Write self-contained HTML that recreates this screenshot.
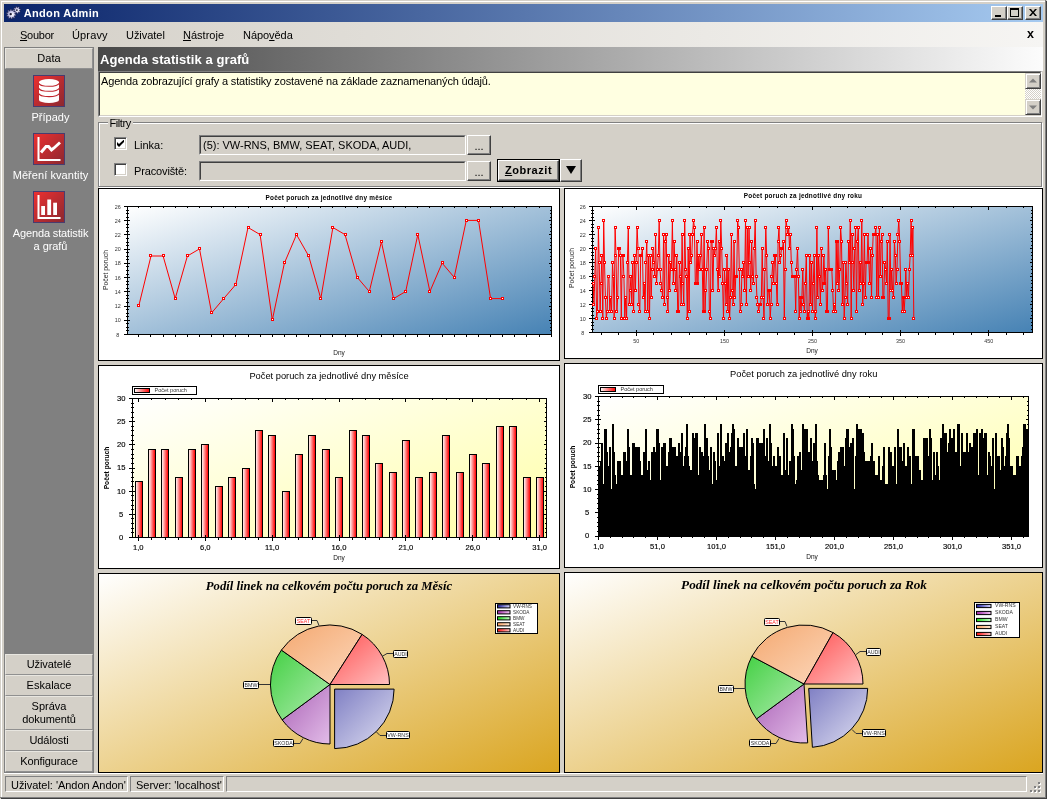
<!DOCTYPE html>
<html><head><meta charset="utf-8"><title>Andon Admin</title>
<style>
html,body{margin:0;padding:0;}
body{will-change:transform;width:1047px;height:799px;overflow:hidden;background:#d4d0c8;font-family:"Liberation Sans",sans-serif;font-size:11px;color:#000;position:relative;}
.abs{position:absolute;}
#frame{position:absolute;left:0;top:0;width:1045px;height:797px;border-right:1px solid #808080;border-bottom:1px solid #808080;box-shadow:1px 1px 0 #404040;}
#frame2{position:absolute;left:1px;top:1px;width:1043px;height:795px;border-left:1px solid #fff;border-top:1px solid #fff;}
#title{position:absolute;left:4px;top:4px;width:1039px;height:18px;background:linear-gradient(90deg,#0a246a 0%,#a6caf0 100%);}
#title span{position:absolute;left:19.7px;top:3px;color:#fff;font-weight:bold;font-size:11px;}
.tb{position:absolute;top:6px;width:16px;height:14px;background:#d4d0c8;box-sizing:border-box;border:1px solid;border-color:#fff #404040 #404040 #fff;box-shadow:inset -1px -1px 0 #808080;}
#menu{position:absolute;left:4px;top:22px;width:1039px;height:25px;background:linear-gradient(90deg,#d4d0c8 0%,#f6f5f3 100%);}
#menu span{position:absolute;top:7px;font-size:11px;}
u{text-decoration:underline;}
#side{position:absolute;left:4px;top:47px;width:90px;height:726px;background:#808080;}
.sb{position:absolute;left:1px;width:88px;background:#d4d0c8;text-align:center;box-sizing:border-box;border:1px solid;border-color:#e8e6e0 #909090 #909090 #e8e6e0;font-size:11px;}
.ico{position:absolute;left:29px;width:32px;height:32px;}
.lbl{position:absolute;left:1.5px;width:90px;text-align:center;color:#fff;font-size:11px;line-height:13px;}
#hdr{position:absolute;left:98px;top:47px;width:945px;height:24px;background:linear-gradient(90deg,#484848 0%,#fcfcfc 100%);}
#hdr span{position:absolute;left:2px;top:5px;color:#fff;font-weight:bold;font-size:13px;}
#desc{position:absolute;left:98px;top:71px;width:944px;height:46px;background:#ffffe1;box-sizing:border-box;border:1px solid;border-color:#808080 #fff #fff #808080;}
#desc .in{position:absolute;left:0;top:0;right:0;bottom:0;border:1px solid;border-color:#404040 #d4d0c8 #d4d0c8 #404040;}
#desc span{position:absolute;left:2px;top:3px;font-size:11px;}
.sbtn{position:absolute;left:1025px;width:16px;height:16px;background:#d4d0c8;box-sizing:border-box;border:1px solid;border-color:#d4d0c8 #404040 #404040 #d4d0c8;box-shadow:inset 1px 1px 0 #fff,inset -1px -1px 0 #808080;}
#grp{position:absolute;left:98px;top:122px;width:944px;height:65px;box-sizing:border-box;border:1px solid #808080;box-shadow:inset 1px 1px 0 #fff,1px 1px 0 #fff;}
.tf{position:absolute;left:199px;width:267px;height:20px;box-sizing:border-box;background:#d4d0c8;border:1px solid;border-color:#808080 #fff #fff #808080;}
.tf i{position:absolute;left:0;top:0;right:0;bottom:0;border:1px solid;border-color:#404040 #d4d0c8 #d4d0c8 #404040;}
.tf span{position:absolute;left:3px;top:3px;font-size:11px;}
.btn{position:absolute;background:#d4d0c8;box-sizing:border-box;border:1px solid;border-color:#fff #404040 #404040 #fff;box-shadow:inset -1px -1px 0 #808080;text-align:center;}
.cb{position:absolute;left:114px;width:13px;height:13px;box-sizing:border-box;background:#fff;border:1px solid;border-color:#808080 #fff #fff #808080;box-shadow:inset 1px 1px 0 #404040,inset -1px -1px 0 #d4d0c8;}
#status{position:absolute;left:4px;top:774px;width:1039px;height:21px;}
.sp{position:absolute;top:2px;height:16px;box-sizing:border-box;border:1px solid;border-color:#808080 #fff #fff #808080;font-size:11px;line-height:17px;padding-left:5px;white-space:nowrap;}
/*LS*/#t_title{letter-spacing:0.345px}#t_m1{letter-spacing:-0.247px}#t_m2{letter-spacing:0.143px}#t_m3{letter-spacing:-0.041px}#t_m4{letter-spacing:0.014px}#t_m5{letter-spacing:-0.057px}#t_data{letter-spacing:0.113px}#t_l1{letter-spacing:0.011px}#t_l2{letter-spacing:0.074px}#t_l3{letter-spacing:-0.135px}#t_l4{letter-spacing:-0.064px}#t_b1{letter-spacing:-0.061px}#t_b2{letter-spacing:0.020px}#t_b3{letter-spacing:-0.010px}#t_b4{letter-spacing:-0.104px}#t_b5{letter-spacing:-0.094px}#t_b6{letter-spacing:-0.111px}#t_hdr{letter-spacing:0.084px}#t_desc{letter-spacing:-0.153px}#t_f{letter-spacing:-0.421px}#t_linka{letter-spacing:-0.027px}#t_prac{letter-spacing:-0.138px}#t_tf{letter-spacing:-0.009px}#t_zob{letter-spacing:0.550px}#t_s1{letter-spacing:-0.035px}#t_s2{letter-spacing:-0.018px}</style></head><body>
<div id="frame"></div><div id="frame2"></div>
<div id="title">
<svg class="abs" style="left:2px;top:1px" width="16" height="16" viewBox="0 0 16 16"><defs><radialGradient id="gg" cx="0.6" cy="0.55" r="0.6"><stop offset="0" stop-color="#ffffff"/><stop offset="0.5" stop-color="#c8c8ec"/><stop offset="1" stop-color="#8080b0"/></radialGradient></defs><path d="M13.48 5.87L14.32 6.73L13.85 7.46L12.72 7.05L12.21 7.40L12.19 8.60L11.34 8.78L10.83 7.69L10.23 7.58L9.37 8.42L8.64 7.95L9.05 6.82L8.70 6.31L7.50 6.29L7.32 5.44L8.41 4.93L8.52 4.33L7.68 3.47L8.15 2.74L9.28 3.15L9.79 2.80L9.81 1.60L10.66 1.42L11.17 2.51L11.77 2.62L12.63 1.78L13.36 2.25L12.95 3.38L13.30 3.89L14.50 3.91L14.68 4.76L13.59 5.27Z" fill="url(#gg)" stroke="#202040" stroke-width="0.5"/><path d="M8.80 9.10L10.16 9.73L9.96 10.65L8.46 10.63L8.11 11.22L8.84 12.52L8.14 13.15L6.93 12.25L6.31 12.52L6.14 14.01L5.20 14.10L4.75 12.67L4.09 12.52L3.07 13.62L2.26 13.15L2.74 11.72L2.29 11.22L0.82 11.51L0.44 10.65L1.66 9.77L1.60 9.10L0.24 8.47L0.44 7.55L1.94 7.57L2.29 6.98L1.56 5.68L2.26 5.05L3.47 5.95L4.09 5.68L4.26 4.19L5.20 4.10L5.65 5.53L6.31 5.68L7.33 4.58L8.14 5.05L7.66 6.48L8.11 6.98L9.58 6.69L9.96 7.55L8.74 8.43Z" fill="url(#gg)" stroke="#202040" stroke-width="0.5"/><circle cx="4.7" cy="9.1" r="1.2" fill="#181830"/><circle cx="10.9" cy="5.1" r="0.9" fill="#181830"/></svg>
<span id="t_title">Andon Admin</span></div>
<div class="tb" style="left:991px"><div class="abs" style="left:3px;top:8px;width:6px;height:2px;background:#000"></div></div>
<div class="tb" style="left:1007px"><div class="abs" style="left:2px;top:1px;width:9px;height:9px;box-sizing:border-box;border:1px solid #000;border-top-width:2px"></div></div>
<div class="tb" style="left:1025px"><svg class="abs" style="left:3px;top:2px" width="8" height="7" viewBox="0 0 8 7"><path d="M0 0h2l2 2.500 2-2.500h2l-3 3.500 3 3.500h-2l-2-2.500-2 2.500h-2l3-3.500z" fill="#000"/></svg></div>
<div id="menu">
<span id="t_m1" style="left:16px"><u>S</u>oubor</span><span id="t_m2" style="left:68px">Úpravy</span><span id="t_m3" style="left:122px">Uživatel</span><span id="t_m4" style="left:179px"><u>N</u>ástroje</span><span id="t_m5" style="left:239px">Nápo<u>v</u>ěda</span>
<span style="left:1023px;font-weight:bold;font-size:12.5px;top:5px">x</span>
</div>
<div id="side">
<div class="sb" style="top:1px;height:21px;line-height:18px"><span id="t_data">Data</span></div>
<svg class="ico" style="top:28px" viewBox="0 0 32 32"><defs><linearGradient id="ig" x1="0" y1="0" x2="1" y2="1"><stop offset="0" stop-color="#ee3030"/><stop offset="1" stop-color="#8a2830"/></linearGradient></defs><rect x=".5" y=".5" width="31" height="31" fill="url(#ig)" stroke="#483c70"/>
<g><path d="M6 7v18a10 3 0 0 0 20 0v-18z" fill="#fff"/><ellipse cx="16" cy="7" rx="10" ry="3" fill="#fff"/><g fill="none" stroke="#c0242c" stroke-width="1.1"><path d="M6 8.300a10 3 0 0 0 20 0"/><path d="M6 13.300a10 3 0 0 0 20 0"/><path d="M6 18.600a10 3 0 0 0 20 0"/></g></g></svg>
<div class="lbl" style="top:64px"><span id="t_l1">Případy</span></div>
<svg class="ico" style="top:86px" viewBox="0 0 32 32"><rect x=".5" y=".5" width="31" height="31" fill="url(#ig)" stroke="#483c70"/><path d="M5.500 4v23h22" fill="none" stroke="#fff" stroke-width="2"/><path d="M8 19.500L13 13.500L15.500 13.500L18.500 17L21 15L27 9.500" fill="none" stroke="#fff" stroke-width="2.900"/></svg>
<div class="lbl" style="top:122px"><span id="t_l2">Měření kvantity</span></div>
<svg class="ico" style="top:144px" viewBox="0 0 32 32"><rect x=".5" y=".5" width="31" height="31" fill="url(#ig)" stroke="#483c70"/><path d="M5.500 4v23h22" fill="none" stroke="#fff" stroke-width="2"/><rect x="8.200" y="15" width="3.800" height="9" fill="#fff"/><rect x="14.300" y="8.500" width="3.800" height="15.500" fill="#fff"/><rect x="20.200" y="11.700" width="3.800" height="12.300" fill="#fff"/></svg>
<div class="lbl" style="top:180px"><span id="t_l3">Agenda statistik</span><br><span id="t_l4">a grafů</span></div>
<div class="sb" style="top:607px;height:21px;line-height:18px"><span id="t_b1">Uživatelé</span></div>
<div class="sb" style="top:628px;height:21px;line-height:18px"><span id="t_b2">Eskalace</span></div>
<div class="sb" style="top:649px;height:34px;line-height:13px;padding-top:3px"><span id="t_b3">Správa</span><br><span id="t_b4">dokumentů</span></div>
<div class="sb" style="top:683px;height:21px;line-height:18px"><span id="t_b5">Události</span></div>
<div class="sb" style="top:704px;height:21px;line-height:18px"><span id="t_b6">Konfigurace</span></div>
</div>
<div id="hdr"><span id="t_hdr">Agenda statistik a grafů</span></div>
<div id="desc"><div class="in"></div><span id="t_desc">Agenda zobrazující grafy a statistiky zostavené na základe zaznamenaných údajů.</span></div>
<div class="abs" style="left:1025px;top:73px;width:16px;height:42px;background:repeating-conic-gradient(#fff 0 25%,#d4d0c8 0 50%) 0 0/2px 2px"></div>
<div class="sbtn" style="top:73px"><svg class="abs" style="left:3px;top:4px" width="8" height="5"><path d="M0 4.500L4 .5l4 4z" fill="#808080"/></svg></div>
<div class="sbtn" style="top:99px"><svg class="abs" style="left:3px;top:5px" width="8" height="5"><path d="M0 .5h8L4 4.500z" fill="#808080"/></svg></div>
<div id="grp"></div>
<div class="abs" style="left:107.5px;top:117px;background:#d4d0c8;padding:0 2px;font-size:11px"><span id="t_f">Filtry</span></div>
<div class="cb" style="top:137px"><svg class="abs" style="left:2px;top:2px" width="7" height="7"><path d="M0 2v3l2 2 5-5v-2.500l-5 4.500z" fill="#000"/></svg></div>
<div class="cb" style="top:163px"></div>
<div class="abs" style="left:134px;top:139px;font-size:11px"><span id="t_linka">Linka:</span></div>
<div class="abs" style="left:134px;top:165px;font-size:11px"><span id="t_prac">Pracoviště:</span></div>
<div class="tf" style="top:135px"><i></i><span id="t_tf">(5): VW-RNS, BMW, SEAT, SKODA, AUDI,</span></div>
<div class="tf" style="top:161px"><i></i></div>
<div class="btn" style="left:467px;top:135px;width:24px;height:20px;line-height:20px">...</div>
<div class="btn" style="left:467px;top:161px;width:24px;height:20px;line-height:20px">...</div>
<div class="abs" style="left:497px;top:159px;width:63px;height:23px;box-sizing:border-box;border:1px solid #000"><div class="btn" style="left:0;top:0;width:61px;height:21px;line-height:18px;font-weight:bold;font-size:11px"><span id="t_zob"><u>Z</u>obrazit</span></div></div>
<div class="btn" style="left:560px;top:159px;width:22px;height:23px"><svg class="abs" style="left:5px;top:6px" width="10" height="8"><path d="M0 0h10L5 8z" fill="#000"/></svg></div>
<svg style="position:absolute;left:98px;top:188px" width="462" height="173" viewBox="98 188 462 173">
<defs><linearGradient id="gl1" x1="0" y1="0" x2="1" y2="1"><stop offset="0" stop-color="#ffffff"/><stop offset="1" stop-color="#4682b4"/></linearGradient></defs>
<rect x="98.5" y="188.5" width="461" height="172" fill="#fff" stroke="#000" shape-rendering="crispEdges"/>
<rect x="127.5" y="206.5" width="424.0" height="128.0" fill="url(#gl1)" stroke="#000" stroke-width="1" shape-rendering="crispEdges"/>
<text x="117.7" y="336.5" font-size="5.4" text-anchor="middle" style="font-family:'Liberation Sans',sans-serif" fill="#333">8</text>
<text x="117.7" y="322.3" font-size="5.4" text-anchor="middle" style="font-family:'Liberation Sans',sans-serif" fill="#333">10</text>
<text x="117.7" y="308.1" font-size="5.4" text-anchor="middle" style="font-family:'Liberation Sans',sans-serif" fill="#333">12</text>
<text x="117.7" y="293.8" font-size="5.4" text-anchor="middle" style="font-family:'Liberation Sans',sans-serif" fill="#333">14</text>
<text x="117.7" y="279.6" font-size="5.4" text-anchor="middle" style="font-family:'Liberation Sans',sans-serif" fill="#333">16</text>
<text x="117.7" y="265.4" font-size="5.4" text-anchor="middle" style="font-family:'Liberation Sans',sans-serif" fill="#333">18</text>
<text x="117.7" y="251.2" font-size="5.4" text-anchor="middle" style="font-family:'Liberation Sans',sans-serif" fill="#333">20</text>
<text x="117.7" y="236.9" font-size="5.4" text-anchor="middle" style="font-family:'Liberation Sans',sans-serif" fill="#333">22</text>
<text x="117.7" y="222.7" font-size="5.4" text-anchor="middle" style="font-family:'Liberation Sans',sans-serif" fill="#333">24</text>
<text x="117.7" y="208.5" font-size="5.4" text-anchor="middle" style="font-family:'Liberation Sans',sans-serif" fill="#333">26</text>
<path d="M124.0 334.5H130.0M549.0 334.5H551.5 M124.0 320.5H130.0M549.0 320.5H551.5 M124.0 306.5H130.0M549.0 306.5H551.5 M124.0 291.5H130.0M549.0 291.5H551.5 M124.0 277.5H130.0M549.0 277.5H551.5 M124.0 263.5H130.0M549.0 263.5H551.5 M124.0 249.5H130.0M549.0 249.5H551.5 M124.0 234.5H130.0M549.0 234.5H551.5 M124.0 220.5H130.0M549.0 220.5H551.5 M124.0 206.5H130.0M549.0 206.5H551.5 M126.0 334.5H129.0M550.0 334.5H551.5 M126.0 330.5H129.0M550.0 330.5H551.5 M126.0 327.5H129.0M550.0 327.5H551.5 M126.0 323.5H129.0M550.0 323.5H551.5 M126.0 320.5H129.0M550.0 320.5H551.5 M126.0 316.5H129.0M550.0 316.5H551.5 M126.0 313.5H129.0M550.0 313.5H551.5 M126.0 309.5H129.0M550.0 309.5H551.5 M126.0 306.5H129.0M550.0 306.5H551.5 M126.0 302.5H129.0M550.0 302.5H551.5 M126.0 298.5H129.0M550.0 298.5H551.5 M126.0 295.5H129.0M550.0 295.5H551.5 M126.0 291.5H129.0M550.0 291.5H551.5 M126.0 288.5H129.0M550.0 288.5H551.5 M126.0 284.5H129.0M550.0 284.5H551.5 M126.0 281.5H129.0M550.0 281.5H551.5 M126.0 277.5H129.0M550.0 277.5H551.5 M126.0 274.5H129.0M550.0 274.5H551.5 M126.0 270.5H129.0M550.0 270.5H551.5 M126.0 266.5H129.0M550.0 266.5H551.5 M126.0 263.5H129.0M550.0 263.5H551.5 M126.0 259.5H129.0M550.0 259.5H551.5 M126.0 256.5H129.0M550.0 256.5H551.5 M126.0 252.5H129.0M550.0 252.5H551.5 M126.0 249.5H129.0M550.0 249.5H551.5 M126.0 245.5H129.0M550.0 245.5H551.5 M126.0 242.5H129.0M550.0 242.5H551.5 M126.0 238.5H129.0M550.0 238.5H551.5 M126.0 234.5H129.0M550.0 234.5H551.5 M126.0 231.5H129.0M550.0 231.5H551.5 M126.0 227.5H129.0M550.0 227.5H551.5 M126.0 224.5H129.0M550.0 224.5H551.5 M126.0 220.5H129.0M550.0 220.5H551.5 M126.0 217.5H129.0M550.0 217.5H551.5 M126.0 213.5H129.0M550.0 213.5H551.5 M126.0 210.5H129.0M550.0 210.5H551.5 M126.0 206.5H129.0M550.0 206.5H551.5 M138.5 333.5V336.5M138.5 206.5V208.0 M150.5 333.5V336.5M150.5 206.5V208.0 M163.5 333.5V336.5M163.5 206.5V208.0 M175.5 333.5V336.5M175.5 206.5V208.0 M187.5 333.5V336.5M187.5 206.5V208.0 M199.5 333.5V336.5M199.5 206.5V208.0 M211.5 333.5V336.5M211.5 206.5V208.0 M223.5 333.5V336.5M223.5 206.5V208.0 M235.5 333.5V336.5M235.5 206.5V208.0 M248.5 333.5V336.5M248.5 206.5V208.0 M260.5 333.5V336.5M260.5 206.5V208.0 M272.5 333.5V336.5M272.5 206.5V208.0 M284.5 333.5V336.5M284.5 206.5V208.0 M296.5 333.5V336.5M296.5 206.5V208.0 M308.5 333.5V336.5M308.5 206.5V208.0 M320.5 333.5V336.5M320.5 206.5V208.0 M332.5 333.5V336.5M332.5 206.5V208.0 M345.5 333.5V336.5M345.5 206.5V208.0 M357.5 333.5V336.5M357.5 206.5V208.0 M369.5 333.5V336.5M369.5 206.5V208.0 M381.5 333.5V336.5M381.5 206.5V208.0 M393.5 333.5V336.5M393.5 206.5V208.0 M405.5 333.5V336.5M405.5 206.5V208.0 M417.5 333.5V336.5M417.5 206.5V208.0 M429.5 333.5V336.5M429.5 206.5V208.0 M442.5 333.5V336.5M442.5 206.5V208.0 M454.5 333.5V336.5M454.5 206.5V208.0 M466.5 333.5V336.5M466.5 206.5V208.0 M478.5 333.5V336.5M478.5 206.5V208.0 M490.5 333.5V336.5M490.5 206.5V208.0 M502.5 333.5V336.5M502.5 206.5V208.0 M514.5 333.5V336.5M514.5 206.5V208.0 M526.5 333.5V336.5M526.5 206.5V208.0 M539.5 333.5V336.5M539.5 206.5V208.0 M551.5 333.5V336.5M551.5 206.5V208.0" stroke="#000" stroke-width="1" fill="none" shape-rendering="crispEdges"/>
<polyline fill="none" stroke="#ff0000" stroke-width="1" points="138.8,305.8 151.0,256.0 163.1,256.0 175.2,298.6 187.4,256.0 199.5,248.9 211.6,312.9 223.7,298.6 235.9,284.4 248.0,227.5 260.1,234.6 272.3,320.0 284.4,263.1 296.5,234.6 308.7,256.0 320.8,298.6 332.9,227.5 345.0,234.6 357.2,277.3 369.3,291.5 381.4,241.8 393.6,298.6 405.7,291.5 417.8,234.6 429.9,291.5 442.1,263.1 454.2,277.3 466.3,220.4 478.5,220.4 490.6,298.6 502.7,298.6"/>
<path d="M137.5 304.5h2v2h-2z M149.5 254.5h2v2h-2z M162.5 254.5h2v2h-2z M174.5 297.5h2v2h-2z M186.5 254.5h2v2h-2z M198.5 247.5h2v2h-2z M210.5 311.5h2v2h-2z M222.5 297.5h2v2h-2z M234.5 283.5h2v2h-2z M247.5 226.5h2v2h-2z M259.5 233.5h2v2h-2z M271.5 318.5h2v2h-2z M283.5 261.5h2v2h-2z M295.5 233.5h2v2h-2z M307.5 254.5h2v2h-2z M319.5 297.5h2v2h-2z M331.5 226.5h2v2h-2z M344.5 233.5h2v2h-2z M356.5 276.5h2v2h-2z M368.5 290.5h2v2h-2z M380.5 240.5h2v2h-2z M392.5 297.5h2v2h-2z M404.5 290.5h2v2h-2z M416.5 233.5h2v2h-2z M428.5 290.5h2v2h-2z M441.5 261.5h2v2h-2z M453.5 276.5h2v2h-2z M465.5 219.5h2v2h-2z M477.5 219.5h2v2h-2z M489.5 297.5h2v2h-2z M501.5 297.5h2v2h-2z" fill="#fff" stroke="#ff0000" stroke-width="1" shape-rendering="crispEdges"/>
<text x="329" y="200" font-size="6.4" font-weight="bold" text-anchor="middle" style="font-family:'Liberation Sans',sans-serif" fill="#000" letter-spacing="0.25">Počet poruch za jednotlivé dny měsíce</text>
<text x="339" y="355" font-size="6.5" text-anchor="middle" style="font-family:'Liberation Sans',sans-serif" fill="#222">Dny</text>
<text transform="translate(108,270) rotate(-90)" font-size="6.8" text-anchor="middle" style="font-family:'Liberation Sans',sans-serif" fill="#222">Počet poruch</text>
</svg>
<svg style="position:absolute;left:564px;top:188px" width="479" height="171" viewBox="564 188 479 171">
<defs><linearGradient id="gl2" x1="0" y1="0" x2="1" y2="1"><stop offset="0" stop-color="#ffffff"/><stop offset="1" stop-color="#4682b4"/></linearGradient></defs>
<rect x="564.5" y="188.5" width="478" height="170" fill="#fff" stroke="#000" shape-rendering="crispEdges"/>
<rect x="592.5" y="206.5" width="440.0" height="126.0" fill="url(#gl2)" stroke="#000" stroke-width="1" shape-rendering="crispEdges"/>
<text x="582.7" y="334.5" font-size="5.4" text-anchor="middle" style="font-family:'Liberation Sans',sans-serif" fill="#333">8</text>
<text x="582.7" y="320.5" font-size="5.4" text-anchor="middle" style="font-family:'Liberation Sans',sans-serif" fill="#333">10</text>
<text x="582.7" y="306.5" font-size="5.4" text-anchor="middle" style="font-family:'Liberation Sans',sans-serif" fill="#333">12</text>
<text x="582.7" y="292.5" font-size="5.4" text-anchor="middle" style="font-family:'Liberation Sans',sans-serif" fill="#333">14</text>
<text x="582.7" y="278.5" font-size="5.4" text-anchor="middle" style="font-family:'Liberation Sans',sans-serif" fill="#333">16</text>
<text x="582.7" y="264.5" font-size="5.4" text-anchor="middle" style="font-family:'Liberation Sans',sans-serif" fill="#333">18</text>
<text x="582.7" y="250.5" font-size="5.4" text-anchor="middle" style="font-family:'Liberation Sans',sans-serif" fill="#333">20</text>
<text x="582.7" y="236.5" font-size="5.4" text-anchor="middle" style="font-family:'Liberation Sans',sans-serif" fill="#333">22</text>
<text x="582.7" y="222.5" font-size="5.4" text-anchor="middle" style="font-family:'Liberation Sans',sans-serif" fill="#333">24</text>
<text x="582.7" y="208.5" font-size="5.4" text-anchor="middle" style="font-family:'Liberation Sans',sans-serif" fill="#333">26</text>
<path d="M589.0 332.5H595.0M1030.0 332.5H1032.5 M589.0 318.5H595.0M1030.0 318.5H1032.5 M589.0 304.5H595.0M1030.0 304.5H1032.5 M589.0 290.5H595.0M1030.0 290.5H1032.5 M589.0 276.5H595.0M1030.0 276.5H1032.5 M589.0 262.5H595.0M1030.0 262.5H1032.5 M589.0 248.5H595.0M1030.0 248.5H1032.5 M589.0 234.5H595.0M1030.0 234.5H1032.5 M589.0 220.5H595.0M1030.0 220.5H1032.5 M589.0 206.5H595.0M1030.0 206.5H1032.5 M591.0 332.5H594.0M1031.0 332.5H1032.5 M591.0 329.5H594.0M1031.0 329.5H1032.5 M591.0 325.5H594.0M1031.0 325.5H1032.5 M591.0 322.5H594.0M1031.0 322.5H1032.5 M591.0 318.5H594.0M1031.0 318.5H1032.5 M591.0 315.5H594.0M1031.0 315.5H1032.5 M591.0 311.5H594.0M1031.0 311.5H1032.5 M591.0 308.5H594.0M1031.0 308.5H1032.5 M591.0 304.5H594.0M1031.0 304.5H1032.5 M591.0 301.5H594.0M1031.0 301.5H1032.5 M591.0 297.5H594.0M1031.0 297.5H1032.5 M591.0 294.5H594.0M1031.0 294.5H1032.5 M591.0 290.5H594.0M1031.0 290.5H1032.5 M591.0 287.5H594.0M1031.0 287.5H1032.5 M591.0 283.5H594.0M1031.0 283.5H1032.5 M591.0 280.5H594.0M1031.0 280.5H1032.5 M591.0 276.5H594.0M1031.0 276.5H1032.5 M591.0 273.5H594.0M1031.0 273.5H1032.5 M591.0 269.5H594.0M1031.0 269.5H1032.5 M591.0 266.5H594.0M1031.0 266.5H1032.5 M591.0 262.5H594.0M1031.0 262.5H1032.5 M591.0 259.5H594.0M1031.0 259.5H1032.5 M591.0 255.5H594.0M1031.0 255.5H1032.5 M591.0 252.5H594.0M1031.0 252.5H1032.5 M591.0 248.5H594.0M1031.0 248.5H1032.5 M591.0 245.5H594.0M1031.0 245.5H1032.5 M591.0 241.5H594.0M1031.0 241.5H1032.5 M591.0 238.5H594.0M1031.0 238.5H1032.5 M591.0 234.5H594.0M1031.0 234.5H1032.5 M591.0 231.5H594.0M1031.0 231.5H1032.5 M591.0 227.5H594.0M1031.0 227.5H1032.5 M591.0 224.5H594.0M1031.0 224.5H1032.5 M591.0 220.5H594.0M1031.0 220.5H1032.5 M591.0 217.5H594.0M1031.0 217.5H1032.5 M591.0 213.5H594.0M1031.0 213.5H1032.5 M591.0 210.5H594.0M1031.0 210.5H1032.5 M591.0 206.5H594.0M1031.0 206.5H1032.5 M601.5 331.5V334.5M601.5 206.5V208.0 M618.5 331.5V334.5M618.5 206.5V208.0 M636.5 330.0V336.0M636.5 206.5V209.5 M653.5 331.5V334.5M653.5 206.5V208.0 M671.5 331.5V334.5M671.5 206.5V208.0 M689.5 331.5V334.5M689.5 206.5V208.0 M706.5 331.5V334.5M706.5 206.5V208.0 M724.5 330.0V336.0M724.5 206.5V209.5 M741.5 331.5V334.5M741.5 206.5V208.0 M759.5 331.5V334.5M759.5 206.5V208.0 M777.5 331.5V334.5M777.5 206.5V208.0 M794.5 331.5V334.5M794.5 206.5V208.0 M812.5 330.0V336.0M812.5 206.5V209.5 M830.5 331.5V334.5M830.5 206.5V208.0 M847.5 331.5V334.5M847.5 206.5V208.0 M865.5 331.5V334.5M865.5 206.5V208.0 M882.5 331.5V334.5M882.5 206.5V208.0 M900.5 330.0V336.0M900.5 206.5V209.5 M918.5 331.5V334.5M918.5 206.5V208.0 M935.5 331.5V334.5M935.5 206.5V208.0 M953.5 331.5V334.5M953.5 206.5V208.0 M971.5 331.5V334.5M971.5 206.5V208.0 M988.5 330.0V336.0M988.5 206.5V209.5 M1006.5 331.5V334.5M1006.5 206.5V208.0 M1023.5 331.5V334.5M1023.5 206.5V208.0" stroke="#000" stroke-width="1" fill="none" shape-rendering="crispEdges"/>
<text x="636.2" y="342.8" font-size="5.4" text-anchor="middle" style="font-family:'Liberation Sans',sans-serif" fill="#333">50</text>
<text x="724.4" y="342.8" font-size="5.4" text-anchor="middle" style="font-family:'Liberation Sans',sans-serif" fill="#333">150</text>
<text x="812.5" y="342.8" font-size="5.4" text-anchor="middle" style="font-family:'Liberation Sans',sans-serif" fill="#333">250</text>
<text x="900.6" y="342.8" font-size="5.4" text-anchor="middle" style="font-family:'Liberation Sans',sans-serif" fill="#333">350</text>
<text x="988.7" y="342.8" font-size="5.4" text-anchor="middle" style="font-family:'Liberation Sans',sans-serif" fill="#333">450</text>
<polyline fill="none" stroke="#ff0000" stroke-width="1" points="593.1,283.2 594.0,304.2 594.8,276.2 595.7,248.2 596.6,318.2 597.5,311.2 598.4,227.2 599.2,262.2 600.1,311.2 601.0,283.2 601.9,255.2 602.8,318.2 603.7,220.2 604.5,262.2 605.4,297.2 606.3,318.2 607.2,311.2 608.1,276.2 608.9,276.2 609.8,311.2 610.7,297.2 611.6,311.2 612.5,262.2 613.3,276.2 614.2,318.2 615.1,227.2 616.0,255.2 616.9,311.2 617.7,297.2 618.6,248.2 619.5,248.2 620.4,255.2 621.3,318.2 622.2,255.2 623.0,255.2 623.9,276.2 624.8,318.2 625.7,297.2 626.6,318.2 627.4,262.2 628.3,227.2 629.2,304.2 630.1,290.2 631.0,276.2 631.8,304.2 632.7,262.2 633.6,311.2 634.5,255.2 635.4,290.2 636.2,262.2 637.1,227.2 638.0,248.2 638.9,304.2 639.8,311.2 640.7,255.2 641.5,255.2 642.4,248.2 643.3,297.2 644.2,283.2 645.1,311.2 645.9,262.2 646.8,241.2 647.7,311.2 648.6,255.2 649.5,318.2 650.3,255.2 651.2,297.2 652.1,269.2 653.0,248.2 653.9,262.2 654.8,276.2 655.6,234.2 656.5,283.2 657.4,269.2 658.3,255.2 659.2,220.2 660.0,269.2 660.9,283.2 661.8,290.2 662.7,297.2 663.6,234.2 664.4,304.2 665.3,241.2 666.2,234.2 667.1,297.2 668.0,311.2 668.8,255.2 669.7,290.2 670.6,262.2 671.5,269.2 672.4,220.2 673.3,283.2 674.1,241.2 675.0,269.2 675.9,290.2 676.8,255.2 677.7,311.2 678.5,311.2 679.4,262.2 680.3,276.2 681.2,304.2 682.1,234.2 682.9,283.2 683.8,304.2 684.7,220.2 685.6,269.2 686.5,276.2 687.3,318.2 688.2,248.2 689.1,311.2 690.0,234.2 690.9,262.2 691.8,255.2 692.6,234.2 693.5,220.2 694.4,227.2 695.3,283.2 696.2,283.2 697.0,241.2 697.9,283.2 698.8,255.2 699.7,269.2 700.6,255.2 701.4,234.2 702.3,269.2 703.2,311.2 704.1,227.2 705.0,311.2 705.8,290.2 706.7,269.2 707.6,241.2 708.5,248.2 709.4,311.2 710.3,318.2 711.1,241.2 712.0,241.2 712.9,290.2 713.8,248.2 714.7,255.2 715.5,248.2 716.4,227.2 717.3,269.2 718.2,290.2 719.1,241.2 719.9,276.2 720.8,220.2 721.7,248.2 722.6,283.2 723.5,318.2 724.4,269.2 725.2,283.2 726.1,304.2 727.0,255.2 727.9,311.2 728.8,269.2 729.6,318.2 730.5,297.2 731.4,234.2 732.3,290.2 733.2,304.2 734.0,241.2 734.9,297.2 735.8,276.2 736.7,276.2 737.6,220.2 738.4,227.2 739.3,269.2 740.2,311.2 741.1,304.2 742.0,269.2 742.9,276.2 743.7,262.2 744.6,290.2 745.5,220.2 746.4,304.2 747.3,227.2 748.1,276.2 749.0,227.2 749.9,262.2 750.8,290.2 751.7,241.2 752.5,276.2 753.4,283.2 754.3,248.2 755.2,220.2 756.1,276.2 756.9,297.2 757.8,304.2 758.7,311.2 759.6,304.2 760.5,304.2 761.4,297.2 762.2,248.2 763.1,297.2 764.0,318.2 764.9,269.2 765.8,227.2 766.6,255.2 767.5,304.2 768.4,290.2 769.3,290.2 770.2,318.2 771.0,304.2 771.9,276.2 772.8,262.2 773.7,283.2 774.6,255.2 775.4,255.2 776.3,283.2 777.2,304.2 778.1,241.2 779.0,227.2 779.9,262.2 780.7,255.2 781.6,248.2 782.5,248.2 783.4,241.2 784.3,318.2 785.1,269.2 786.0,220.2 786.9,227.2 787.8,234.2 788.7,227.2 789.5,248.2 790.4,234.2 791.3,262.2 792.2,276.2 793.1,276.2 793.9,276.2 794.8,276.2 795.7,311.2 796.6,269.2 797.5,248.2 798.4,276.2 799.2,318.2 800.1,297.2 801.0,311.2 801.9,297.2 802.8,269.2 803.6,304.2 804.5,311.2 805.4,283.2 806.3,255.2 807.2,318.2 808.0,311.2 808.9,318.2 809.8,255.2 810.7,304.2 811.6,262.2 812.5,311.2 813.3,283.2 814.2,255.2 815.1,318.2 816.0,311.2 816.9,227.2 817.7,297.2 818.6,255.2 819.5,276.2 820.4,304.2 821.3,248.2 822.1,290.2 823.0,283.2 823.9,255.2 824.8,283.2 825.7,269.2 826.5,311.2 827.4,311.2 828.3,227.2 829.2,269.2 830.1,269.2 831.0,269.2 831.8,269.2 832.7,290.2 833.6,311.2 834.5,304.2 835.4,311.2 836.2,241.2 837.1,283.2 838.0,241.2 838.9,290.2 839.8,269.2 840.6,227.2 841.5,241.2 842.4,304.2 843.3,262.2 844.2,318.2 845.0,297.2 845.9,262.2 846.8,283.2 847.7,304.2 848.6,241.2 849.5,262.2 850.3,220.2 851.2,318.2 852.1,234.2 853.0,262.2 853.9,290.2 854.7,248.2 855.6,227.2 856.5,311.2 857.4,241.2 858.3,227.2 859.1,290.2 860.0,262.2 860.9,283.2 861.8,220.2 862.7,304.2 863.5,283.2 864.4,234.2 865.3,297.2 866.2,262.2 867.1,262.2 868.0,234.2 868.8,262.2 869.7,283.2 870.6,248.2 871.5,297.2 872.4,255.2 873.2,234.2 874.1,234.2 875.0,234.2 875.9,227.2 876.8,297.2 877.6,234.2 878.5,297.2 879.4,227.2 880.3,276.2 881.2,241.2 882.0,234.2 882.9,297.2 883.8,297.2 884.7,262.2 885.6,269.2 886.5,283.2 887.3,241.2 888.2,318.2 889.1,318.2 890.0,234.2 890.9,290.2 891.7,269.2 892.6,290.2 893.5,297.2 894.4,241.2 895.3,255.2 896.1,283.2 897.0,269.2 897.9,234.2 898.8,220.2 899.7,241.2 900.6,283.2 901.4,283.2 902.3,311.2 903.2,297.2 904.1,311.2 905.0,297.2 905.8,269.2 906.7,297.2 907.6,283.2 908.5,297.2 909.4,269.2 910.2,255.2 911.1,220.2 912.0,255.2 912.9,227.2 913.8,318.2"/>
<path d="M592.5 282.5h2v2h-2z M592.5 303.5h2v2h-2z M593.5 275.5h2v2h-2z M594.5 247.5h2v2h-2z M595.5 317.5h2v2h-2z M596.5 310.5h2v2h-2z M597.5 226.5h2v2h-2z M598.5 261.5h2v2h-2z M599.5 310.5h2v2h-2z M600.5 282.5h2v2h-2z M600.5 254.5h2v2h-2z M601.5 317.5h2v2h-2z M602.5 219.5h2v2h-2z M603.5 261.5h2v2h-2z M604.5 296.5h2v2h-2z M605.5 317.5h2v2h-2z M606.5 310.5h2v2h-2z M607.5 275.5h2v2h-2z M607.5 275.5h2v2h-2z M608.5 310.5h2v2h-2z M609.5 296.5h2v2h-2z M610.5 310.5h2v2h-2z M611.5 261.5h2v2h-2z M612.5 275.5h2v2h-2z M613.5 317.5h2v2h-2z M614.5 226.5h2v2h-2z M614.5 254.5h2v2h-2z M615.5 310.5h2v2h-2z M616.5 296.5h2v2h-2z M617.5 247.5h2v2h-2z M618.5 247.5h2v2h-2z M619.5 254.5h2v2h-2z M620.5 317.5h2v2h-2z M621.5 254.5h2v2h-2z M622.5 254.5h2v2h-2z M622.5 275.5h2v2h-2z M623.5 317.5h2v2h-2z M624.5 296.5h2v2h-2z M625.5 317.5h2v2h-2z M626.5 261.5h2v2h-2z M627.5 226.5h2v2h-2z M628.5 303.5h2v2h-2z M629.5 289.5h2v2h-2z M629.5 275.5h2v2h-2z M630.5 303.5h2v2h-2z M631.5 261.5h2v2h-2z M632.5 310.5h2v2h-2z M633.5 254.5h2v2h-2z M634.5 289.5h2v2h-2z M635.5 261.5h2v2h-2z M636.5 226.5h2v2h-2z M637.5 247.5h2v2h-2z M637.5 303.5h2v2h-2z M638.5 310.5h2v2h-2z M639.5 254.5h2v2h-2z M640.5 254.5h2v2h-2z M641.5 247.5h2v2h-2z M642.5 296.5h2v2h-2z M643.5 282.5h2v2h-2z M644.5 310.5h2v2h-2z M644.5 261.5h2v2h-2z M645.5 240.5h2v2h-2z M646.5 310.5h2v2h-2z M647.5 254.5h2v2h-2z M648.5 317.5h2v2h-2z M649.5 254.5h2v2h-2z M650.5 296.5h2v2h-2z M651.5 268.5h2v2h-2z M651.5 247.5h2v2h-2z M652.5 261.5h2v2h-2z M653.5 275.5h2v2h-2z M654.5 233.5h2v2h-2z M655.5 282.5h2v2h-2z M656.5 268.5h2v2h-2z M657.5 254.5h2v2h-2z M658.5 219.5h2v2h-2z M659.5 268.5h2v2h-2z M659.5 282.5h2v2h-2z M660.5 289.5h2v2h-2z M661.5 296.5h2v2h-2z M662.5 233.5h2v2h-2z M663.5 303.5h2v2h-2z M664.5 240.5h2v2h-2z M665.5 233.5h2v2h-2z M666.5 296.5h2v2h-2z M666.5 310.5h2v2h-2z M667.5 254.5h2v2h-2z M668.5 289.5h2v2h-2z M669.5 261.5h2v2h-2z M670.5 268.5h2v2h-2z M671.5 219.5h2v2h-2z M672.5 282.5h2v2h-2z M673.5 240.5h2v2h-2z M674.5 268.5h2v2h-2z M674.5 289.5h2v2h-2z M675.5 254.5h2v2h-2z M676.5 310.5h2v2h-2z M677.5 310.5h2v2h-2z M678.5 261.5h2v2h-2z M679.5 275.5h2v2h-2z M680.5 303.5h2v2h-2z M681.5 233.5h2v2h-2z M681.5 282.5h2v2h-2z M682.5 303.5h2v2h-2z M683.5 219.5h2v2h-2z M684.5 268.5h2v2h-2z M685.5 275.5h2v2h-2z M686.5 317.5h2v2h-2z M687.5 247.5h2v2h-2z M688.5 310.5h2v2h-2z M688.5 233.5h2v2h-2z M689.5 261.5h2v2h-2z M690.5 254.5h2v2h-2z M691.5 233.5h2v2h-2z M692.5 219.5h2v2h-2z M693.5 226.5h2v2h-2z M694.5 282.5h2v2h-2z M695.5 282.5h2v2h-2z M696.5 240.5h2v2h-2z M696.5 282.5h2v2h-2z M697.5 254.5h2v2h-2z M698.5 268.5h2v2h-2z M699.5 254.5h2v2h-2z M700.5 233.5h2v2h-2z M701.5 268.5h2v2h-2z M702.5 310.5h2v2h-2z M703.5 226.5h2v2h-2z M703.5 310.5h2v2h-2z M704.5 289.5h2v2h-2z M705.5 268.5h2v2h-2z M706.5 240.5h2v2h-2z M707.5 247.5h2v2h-2z M708.5 310.5h2v2h-2z M709.5 317.5h2v2h-2z M710.5 240.5h2v2h-2z M711.5 240.5h2v2h-2z M711.5 289.5h2v2h-2z M712.5 247.5h2v2h-2z M713.5 254.5h2v2h-2z M714.5 247.5h2v2h-2z M715.5 226.5h2v2h-2z M716.5 268.5h2v2h-2z M717.5 289.5h2v2h-2z M718.5 240.5h2v2h-2z M718.5 275.5h2v2h-2z M719.5 219.5h2v2h-2z M720.5 247.5h2v2h-2z M721.5 282.5h2v2h-2z M722.5 317.5h2v2h-2z M723.5 268.5h2v2h-2z M724.5 282.5h2v2h-2z M725.5 303.5h2v2h-2z M725.5 254.5h2v2h-2z M726.5 310.5h2v2h-2z M727.5 268.5h2v2h-2z M728.5 317.5h2v2h-2z M729.5 296.5h2v2h-2z M730.5 233.5h2v2h-2z M731.5 289.5h2v2h-2z M732.5 303.5h2v2h-2z M733.5 240.5h2v2h-2z M733.5 296.5h2v2h-2z M734.5 275.5h2v2h-2z M735.5 275.5h2v2h-2z M736.5 219.5h2v2h-2z M737.5 226.5h2v2h-2z M738.5 268.5h2v2h-2z M739.5 310.5h2v2h-2z M740.5 303.5h2v2h-2z M740.5 268.5h2v2h-2z M741.5 275.5h2v2h-2z M742.5 261.5h2v2h-2z M743.5 289.5h2v2h-2z M744.5 219.5h2v2h-2z M745.5 303.5h2v2h-2z M746.5 226.5h2v2h-2z M747.5 275.5h2v2h-2z M748.5 226.5h2v2h-2z M748.5 261.5h2v2h-2z M749.5 289.5h2v2h-2z M750.5 240.5h2v2h-2z M751.5 275.5h2v2h-2z M752.5 282.5h2v2h-2z M753.5 247.5h2v2h-2z M754.5 219.5h2v2h-2z M755.5 275.5h2v2h-2z M755.5 296.5h2v2h-2z M756.5 303.5h2v2h-2z M757.5 310.5h2v2h-2z M758.5 303.5h2v2h-2z M759.5 303.5h2v2h-2z M760.5 296.5h2v2h-2z M761.5 247.5h2v2h-2z M762.5 296.5h2v2h-2z M762.5 317.5h2v2h-2z M763.5 268.5h2v2h-2z M764.5 226.5h2v2h-2z M765.5 254.5h2v2h-2z M766.5 303.5h2v2h-2z M767.5 289.5h2v2h-2z M768.5 289.5h2v2h-2z M769.5 317.5h2v2h-2z M770.5 303.5h2v2h-2z M770.5 275.5h2v2h-2z M771.5 261.5h2v2h-2z M772.5 282.5h2v2h-2z M773.5 254.5h2v2h-2z M774.5 254.5h2v2h-2z M775.5 282.5h2v2h-2z M776.5 303.5h2v2h-2z M777.5 240.5h2v2h-2z M777.5 226.5h2v2h-2z M778.5 261.5h2v2h-2z M779.5 254.5h2v2h-2z M780.5 247.5h2v2h-2z M781.5 247.5h2v2h-2z M782.5 240.5h2v2h-2z M783.5 317.5h2v2h-2z M784.5 268.5h2v2h-2z M785.5 219.5h2v2h-2z M785.5 226.5h2v2h-2z M786.5 233.5h2v2h-2z M787.5 226.5h2v2h-2z M788.5 247.5h2v2h-2z M789.5 233.5h2v2h-2z M790.5 261.5h2v2h-2z M791.5 275.5h2v2h-2z M792.5 275.5h2v2h-2z M792.5 275.5h2v2h-2z M793.5 275.5h2v2h-2z M794.5 310.5h2v2h-2z M795.5 268.5h2v2h-2z M796.5 247.5h2v2h-2z M797.5 275.5h2v2h-2z M798.5 317.5h2v2h-2z M799.5 296.5h2v2h-2z M799.5 310.5h2v2h-2z M800.5 296.5h2v2h-2z M801.5 268.5h2v2h-2z M802.5 303.5h2v2h-2z M803.5 310.5h2v2h-2z M804.5 282.5h2v2h-2z M805.5 254.5h2v2h-2z M806.5 317.5h2v2h-2z M807.5 310.5h2v2h-2z M807.5 317.5h2v2h-2z M808.5 254.5h2v2h-2z M809.5 303.5h2v2h-2z M810.5 261.5h2v2h-2z M811.5 310.5h2v2h-2z M812.5 282.5h2v2h-2z M813.5 254.5h2v2h-2z M814.5 317.5h2v2h-2z M814.5 310.5h2v2h-2z M815.5 226.5h2v2h-2z M816.5 296.5h2v2h-2z M817.5 254.5h2v2h-2z M818.5 275.5h2v2h-2z M819.5 303.5h2v2h-2z M820.5 247.5h2v2h-2z M821.5 289.5h2v2h-2z M822.5 282.5h2v2h-2z M822.5 254.5h2v2h-2z M823.5 282.5h2v2h-2z M824.5 268.5h2v2h-2z M825.5 310.5h2v2h-2z M826.5 310.5h2v2h-2z M827.5 226.5h2v2h-2z M828.5 268.5h2v2h-2z M829.5 268.5h2v2h-2z M829.5 268.5h2v2h-2z M830.5 268.5h2v2h-2z M831.5 289.5h2v2h-2z M832.5 310.5h2v2h-2z M833.5 303.5h2v2h-2z M834.5 310.5h2v2h-2z M835.5 240.5h2v2h-2z M836.5 282.5h2v2h-2z M836.5 240.5h2v2h-2z M837.5 289.5h2v2h-2z M838.5 268.5h2v2h-2z M839.5 226.5h2v2h-2z M840.5 240.5h2v2h-2z M841.5 303.5h2v2h-2z M842.5 261.5h2v2h-2z M843.5 317.5h2v2h-2z M844.5 296.5h2v2h-2z M844.5 261.5h2v2h-2z M845.5 282.5h2v2h-2z M846.5 303.5h2v2h-2z M847.5 240.5h2v2h-2z M848.5 261.5h2v2h-2z M849.5 219.5h2v2h-2z M850.5 317.5h2v2h-2z M851.5 233.5h2v2h-2z M851.5 261.5h2v2h-2z M852.5 289.5h2v2h-2z M853.5 247.5h2v2h-2z M854.5 226.5h2v2h-2z M855.5 310.5h2v2h-2z M856.5 240.5h2v2h-2z M857.5 226.5h2v2h-2z M858.5 289.5h2v2h-2z M859.5 261.5h2v2h-2z M859.5 282.5h2v2h-2z M860.5 219.5h2v2h-2z M861.5 303.5h2v2h-2z M862.5 282.5h2v2h-2z M863.5 233.5h2v2h-2z M864.5 296.5h2v2h-2z M865.5 261.5h2v2h-2z M866.5 261.5h2v2h-2z M866.5 233.5h2v2h-2z M867.5 261.5h2v2h-2z M868.5 282.5h2v2h-2z M869.5 247.5h2v2h-2z M870.5 296.5h2v2h-2z M871.5 254.5h2v2h-2z M872.5 233.5h2v2h-2z M873.5 233.5h2v2h-2z M874.5 233.5h2v2h-2z M874.5 226.5h2v2h-2z M875.5 296.5h2v2h-2z M876.5 233.5h2v2h-2z M877.5 296.5h2v2h-2z M878.5 226.5h2v2h-2z M879.5 275.5h2v2h-2z M880.5 240.5h2v2h-2z M881.5 233.5h2v2h-2z M881.5 296.5h2v2h-2z M882.5 296.5h2v2h-2z M883.5 261.5h2v2h-2z M884.5 268.5h2v2h-2z M885.5 282.5h2v2h-2z M886.5 240.5h2v2h-2z M887.5 317.5h2v2h-2z M888.5 317.5h2v2h-2z M888.5 233.5h2v2h-2z M889.5 289.5h2v2h-2z M890.5 268.5h2v2h-2z M891.5 289.5h2v2h-2z M892.5 296.5h2v2h-2z M893.5 240.5h2v2h-2z M894.5 254.5h2v2h-2z M895.5 282.5h2v2h-2z M896.5 268.5h2v2h-2z M896.5 233.5h2v2h-2z M897.5 219.5h2v2h-2z M898.5 240.5h2v2h-2z M899.5 282.5h2v2h-2z M900.5 282.5h2v2h-2z M901.5 310.5h2v2h-2z M902.5 296.5h2v2h-2z M903.5 310.5h2v2h-2z M903.5 296.5h2v2h-2z M904.5 268.5h2v2h-2z M905.5 296.5h2v2h-2z M906.5 282.5h2v2h-2z M907.5 296.5h2v2h-2z M908.5 268.5h2v2h-2z M909.5 254.5h2v2h-2z M910.5 219.5h2v2h-2z M911.5 254.5h2v2h-2z M911.5 226.5h2v2h-2z M912.5 317.5h2v2h-2z" fill="#fff" stroke="#ff0000" stroke-width="1" shape-rendering="crispEdges"/>
<text x="803" y="198" font-size="6.4" font-weight="bold" text-anchor="middle" style="font-family:'Liberation Sans',sans-serif" fill="#000" letter-spacing="0.25">Počet poruch za jednotlivé dny roku</text>
<text x="812" y="353" font-size="6.5" text-anchor="middle" style="font-family:'Liberation Sans',sans-serif" fill="#222">Dny</text>
<text transform="translate(574,268) rotate(-90)" font-size="6.8" text-anchor="middle" style="font-family:'Liberation Sans',sans-serif" fill="#222">Počet poruch</text>
</svg>
<svg style="position:absolute;left:98px;top:365px" width="462" height="204" viewBox="98 365 462 204">
<defs><linearGradient id="gb1" x1="0" y1="0" x2="1" y2="1"><stop offset="0" stop-color="#ffffff"/><stop offset="1" stop-color="#ffffa6"/></linearGradient><linearGradient id="gb1b" x1="0" y1="0" x2="1" y2="0"><stop offset="0" stop-color="#fff4f4"/><stop offset="0.2" stop-color="#ffd4d4"/><stop offset="0.85" stop-color="#ff1818"/><stop offset="1" stop-color="#ff0000"/></linearGradient><linearGradient id="gb1l" x1="0" y1="0" x2="1" y2="0"><stop offset="0" stop-color="#ffffff"/><stop offset="1" stop-color="#ff0000"/></linearGradient></defs>
<rect x="98.5" y="365.5" width="461" height="203" fill="#fff" stroke="#000" shape-rendering="crispEdges"/>
<rect x="132.5" y="398.5" width="414.0" height="139.0" fill="url(#gb1)" stroke="#000" stroke-width="1" shape-rendering="crispEdges"/>
<text x="121.2" y="539.9" font-size="7.6" text-anchor="middle" style="font-family:'Liberation Sans',sans-serif" fill="#000" stroke="#000" stroke-width="0.15">0</text>
<text x="121.2" y="516.7" font-size="7.6" text-anchor="middle" style="font-family:'Liberation Sans',sans-serif" fill="#000" stroke="#000" stroke-width="0.15">5</text>
<text x="121.2" y="493.6" font-size="7.6" text-anchor="middle" style="font-family:'Liberation Sans',sans-serif" fill="#000" stroke="#000" stroke-width="0.15">10</text>
<text x="121.2" y="470.4" font-size="7.6" text-anchor="middle" style="font-family:'Liberation Sans',sans-serif" fill="#000" stroke="#000" stroke-width="0.15">15</text>
<text x="121.2" y="447.2" font-size="7.6" text-anchor="middle" style="font-family:'Liberation Sans',sans-serif" fill="#000" stroke="#000" stroke-width="0.15">20</text>
<text x="121.2" y="424.1" font-size="7.6" text-anchor="middle" style="font-family:'Liberation Sans',sans-serif" fill="#000" stroke="#000" stroke-width="0.15">25</text>
<text x="121.2" y="400.9" font-size="7.6" text-anchor="middle" style="font-family:'Liberation Sans',sans-serif" fill="#000" stroke="#000" stroke-width="0.15">30</text>
<rect x="135.5" y="481.5" width="7" height="56.0" fill="url(#gb1b)" stroke="#000" stroke-width="1" shape-rendering="crispEdges"/>
<rect x="148.5" y="449.5" width="7" height="88.0" fill="url(#gb1b)" stroke="#000" stroke-width="1" shape-rendering="crispEdges"/>
<rect x="161.5" y="449.5" width="7" height="88.0" fill="url(#gb1b)" stroke="#000" stroke-width="1" shape-rendering="crispEdges"/>
<rect x="175.5" y="477.5" width="7" height="60.0" fill="url(#gb1b)" stroke="#000" stroke-width="1" shape-rendering="crispEdges"/>
<rect x="188.5" y="449.5" width="7" height="88.0" fill="url(#gb1b)" stroke="#000" stroke-width="1" shape-rendering="crispEdges"/>
<rect x="201.5" y="444.5" width="7" height="93.0" fill="url(#gb1b)" stroke="#000" stroke-width="1" shape-rendering="crispEdges"/>
<rect x="215.5" y="486.5" width="7" height="51.0" fill="url(#gb1b)" stroke="#000" stroke-width="1" shape-rendering="crispEdges"/>
<rect x="228.5" y="477.5" width="7" height="60.0" fill="url(#gb1b)" stroke="#000" stroke-width="1" shape-rendering="crispEdges"/>
<rect x="242.5" y="468.5" width="7" height="69.0" fill="url(#gb1b)" stroke="#000" stroke-width="1" shape-rendering="crispEdges"/>
<rect x="255.5" y="430.5" width="7" height="107.0" fill="url(#gb1b)" stroke="#000" stroke-width="1" shape-rendering="crispEdges"/>
<rect x="268.5" y="435.5" width="7" height="102.0" fill="url(#gb1b)" stroke="#000" stroke-width="1" shape-rendering="crispEdges"/>
<rect x="282.5" y="491.5" width="7" height="46.0" fill="url(#gb1b)" stroke="#000" stroke-width="1" shape-rendering="crispEdges"/>
<rect x="295.5" y="454.5" width="7" height="83.0" fill="url(#gb1b)" stroke="#000" stroke-width="1" shape-rendering="crispEdges"/>
<rect x="308.5" y="435.5" width="7" height="102.0" fill="url(#gb1b)" stroke="#000" stroke-width="1" shape-rendering="crispEdges"/>
<rect x="322.5" y="449.5" width="7" height="88.0" fill="url(#gb1b)" stroke="#000" stroke-width="1" shape-rendering="crispEdges"/>
<rect x="335.5" y="477.5" width="7" height="60.0" fill="url(#gb1b)" stroke="#000" stroke-width="1" shape-rendering="crispEdges"/>
<rect x="349.5" y="430.5" width="7" height="107.0" fill="url(#gb1b)" stroke="#000" stroke-width="1" shape-rendering="crispEdges"/>
<rect x="362.5" y="435.5" width="7" height="102.0" fill="url(#gb1b)" stroke="#000" stroke-width="1" shape-rendering="crispEdges"/>
<rect x="375.5" y="463.5" width="7" height="74.0" fill="url(#gb1b)" stroke="#000" stroke-width="1" shape-rendering="crispEdges"/>
<rect x="389.5" y="472.5" width="7" height="65.0" fill="url(#gb1b)" stroke="#000" stroke-width="1" shape-rendering="crispEdges"/>
<rect x="402.5" y="440.5" width="7" height="97.0" fill="url(#gb1b)" stroke="#000" stroke-width="1" shape-rendering="crispEdges"/>
<rect x="415.5" y="477.5" width="7" height="60.0" fill="url(#gb1b)" stroke="#000" stroke-width="1" shape-rendering="crispEdges"/>
<rect x="429.5" y="472.5" width="7" height="65.0" fill="url(#gb1b)" stroke="#000" stroke-width="1" shape-rendering="crispEdges"/>
<rect x="442.5" y="435.5" width="7" height="102.0" fill="url(#gb1b)" stroke="#000" stroke-width="1" shape-rendering="crispEdges"/>
<rect x="456.5" y="472.5" width="7" height="65.0" fill="url(#gb1b)" stroke="#000" stroke-width="1" shape-rendering="crispEdges"/>
<rect x="469.5" y="454.5" width="7" height="83.0" fill="url(#gb1b)" stroke="#000" stroke-width="1" shape-rendering="crispEdges"/>
<rect x="482.5" y="463.5" width="7" height="74.0" fill="url(#gb1b)" stroke="#000" stroke-width="1" shape-rendering="crispEdges"/>
<rect x="496.5" y="426.5" width="7" height="111.0" fill="url(#gb1b)" stroke="#000" stroke-width="1" shape-rendering="crispEdges"/>
<rect x="509.5" y="426.5" width="7" height="111.0" fill="url(#gb1b)" stroke="#000" stroke-width="1" shape-rendering="crispEdges"/>
<rect x="523.5" y="477.5" width="7" height="60.0" fill="url(#gb1b)" stroke="#000" stroke-width="1" shape-rendering="crispEdges"/>
<rect x="536.5" y="477.5" width="7" height="60.0" fill="url(#gb1b)" stroke="#000" stroke-width="1" shape-rendering="crispEdges"/>
<path d="M129.0 537.5H135.0M544.0 537.5H546.5 M129.0 514.5H135.0M544.0 514.5H546.5 M129.0 491.5H135.0M544.0 491.5H546.5 M129.0 468.5H135.0M544.0 468.5H546.5 M129.0 444.5H135.0M544.0 444.5H546.5 M129.0 421.5H135.0M544.0 421.5H546.5 M129.0 398.5H135.0M544.0 398.5H546.5 M131.0 537.5H134.0M545.0 537.5H546.5 M131.0 532.5H134.0M545.0 532.5H546.5 M131.0 528.5H134.0M545.0 528.5H546.5 M131.0 523.5H134.0M545.0 523.5H546.5 M131.0 518.5H134.0M545.0 518.5H546.5 M131.0 514.5H134.0M545.0 514.5H546.5 M131.0 509.5H134.0M545.0 509.5H546.5 M131.0 505.5H134.0M545.0 505.5H546.5 M131.0 500.5H134.0M545.0 500.5H546.5 M131.0 495.5H134.0M545.0 495.5H546.5 M131.0 491.5H134.0M545.0 491.5H546.5 M131.0 486.5H134.0M545.0 486.5H546.5 M131.0 481.5H134.0M545.0 481.5H546.5 M131.0 477.5H134.0M545.0 477.5H546.5 M131.0 472.5H134.0M545.0 472.5H546.5 M131.0 468.5H134.0M545.0 468.5H546.5 M131.0 463.5H134.0M545.0 463.5H546.5 M131.0 458.5H134.0M545.0 458.5H546.5 M131.0 454.5H134.0M545.0 454.5H546.5 M131.0 449.5H134.0M545.0 449.5H546.5 M131.0 444.5H134.0M545.0 444.5H546.5 M131.0 440.5H134.0M545.0 440.5H546.5 M131.0 435.5H134.0M545.0 435.5H546.5 M131.0 430.5H134.0M545.0 430.5H546.5 M131.0 426.5H134.0M545.0 426.5H546.5 M131.0 421.5H134.0M545.0 421.5H546.5 M131.0 417.5H134.0M545.0 417.5H546.5 M131.0 412.5H134.0M545.0 412.5H546.5 M131.0 407.5H134.0M545.0 407.5H546.5 M131.0 403.5H134.0M545.0 403.5H546.5 M131.0 398.5H134.0M545.0 398.5H546.5 M138.5 535.0V541.0M138.5 398.5V401.5 M151.5 536.5V539.5M151.5 398.5V400.0 M165.5 536.5V539.5M165.5 398.5V400.0 M178.5 536.5V539.5M178.5 398.5V400.0 M191.5 536.5V539.5M191.5 398.5V400.0 M205.5 535.0V541.0M205.5 398.5V401.5 M218.5 536.5V539.5M218.5 398.5V400.0 M231.5 536.5V539.5M231.5 398.5V400.0 M245.5 536.5V539.5M245.5 398.5V400.0 M258.5 536.5V539.5M258.5 398.5V400.0 M272.5 535.0V541.0M272.5 398.5V401.5 M285.5 536.5V539.5M285.5 398.5V400.0 M298.5 536.5V539.5M298.5 398.5V400.0 M312.5 536.5V539.5M312.5 398.5V400.0 M325.5 536.5V539.5M325.5 398.5V400.0 M339.5 535.0V541.0M339.5 398.5V401.5 M352.5 536.5V539.5M352.5 398.5V400.0 M365.5 536.5V539.5M365.5 398.5V400.0 M379.5 536.5V539.5M379.5 398.5V400.0 M392.5 536.5V539.5M392.5 398.5V400.0 M405.5 535.0V541.0M405.5 398.5V401.5 M419.5 536.5V539.5M419.5 398.5V400.0 M432.5 536.5V539.5M432.5 398.5V400.0 M446.5 536.5V539.5M446.5 398.5V400.0 M459.5 536.5V539.5M459.5 398.5V400.0 M472.5 535.0V541.0M472.5 398.5V401.5 M486.5 536.5V539.5M486.5 398.5V400.0 M499.5 536.5V539.5M499.5 398.5V400.0 M512.5 536.5V539.5M512.5 398.5V400.0 M526.5 536.5V539.5M526.5 398.5V400.0 M539.5 535.0V541.0M539.5 398.5V401.5" stroke="#000" stroke-width="1" fill="none" shape-rendering="crispEdges"/>
<text x="138.3" y="550.1" font-size="7.6" text-anchor="middle" style="font-family:'Liberation Sans',sans-serif" fill="#000" stroke="#000" stroke-width="0.15">1,0</text>
<text x="205.2" y="550.1" font-size="7.6" text-anchor="middle" style="font-family:'Liberation Sans',sans-serif" fill="#000" stroke="#000" stroke-width="0.15">6,0</text>
<text x="272.1" y="550.1" font-size="7.6" text-anchor="middle" style="font-family:'Liberation Sans',sans-serif" fill="#000" stroke="#000" stroke-width="0.15">11,0</text>
<text x="339.0" y="550.1" font-size="7.6" text-anchor="middle" style="font-family:'Liberation Sans',sans-serif" fill="#000" stroke="#000" stroke-width="0.15">16,0</text>
<text x="405.9" y="550.1" font-size="7.6" text-anchor="middle" style="font-family:'Liberation Sans',sans-serif" fill="#000" stroke="#000" stroke-width="0.15">21,0</text>
<text x="472.8" y="550.1" font-size="7.6" text-anchor="middle" style="font-family:'Liberation Sans',sans-serif" fill="#000" stroke="#000" stroke-width="0.15">26,0</text>
<text x="539.7" y="550.1" font-size="7.6" text-anchor="middle" style="font-family:'Liberation Sans',sans-serif" fill="#000" stroke="#000" stroke-width="0.15">31,0</text>
<text x="329" y="379" font-size="9.3" text-anchor="middle" style="font-family:'Liberation Sans',sans-serif" fill="#000">Počet poruch za jednotlivé dny měsíce</text>
<text x="339" y="560" font-size="6.5" text-anchor="middle" style="font-family:'Liberation Sans',sans-serif" fill="#111">Dny</text>
<text transform="translate(109,468) rotate(-90)" font-size="6.7" font-weight="bold" text-anchor="middle" style="font-family:'Liberation Sans',sans-serif" fill="#000">Počet poruch</text>
<rect x="132.5" y="386.5" width="64" height="8" fill="#fff" stroke="#000" shape-rendering="crispEdges"/>
<rect x="134.5" y="388.5" width="15" height="4" fill="url(#gb1l)" stroke="#000" stroke-width="1" shape-rendering="crispEdges"/>
<text x="154.5" y="392.2" font-size="5.5" style="font-family:'Liberation Sans',sans-serif" fill="#333">Počet poruch</text>
</svg>
<svg style="position:absolute;left:564px;top:363px" width="479" height="205" viewBox="564 363 479 205">
<defs><linearGradient id="gb2" x1="0" y1="0" x2="1" y2="1"><stop offset="0" stop-color="#ffffff"/><stop offset="1" stop-color="#ffffa6"/></linearGradient><linearGradient id="gb2b" x1="0" y1="0" x2="1" y2="0"><stop offset="0" stop-color="#fff4f4"/><stop offset="0.2" stop-color="#ffd4d4"/><stop offset="0.85" stop-color="#ff1818"/><stop offset="1" stop-color="#ff0000"/></linearGradient><linearGradient id="gb2l" x1="0" y1="0" x2="1" y2="0"><stop offset="0" stop-color="#ffffff"/><stop offset="1" stop-color="#ff0000"/></linearGradient></defs>
<rect x="564.5" y="363.5" width="478" height="204" fill="#fff" stroke="#000" shape-rendering="crispEdges"/>
<rect x="598.5" y="396.5" width="429.5" height="139.5" fill="url(#gb2)" stroke="#000" stroke-width="1" shape-rendering="crispEdges"/>
<text x="587.2" y="538.4" font-size="7.6" text-anchor="middle" style="font-family:'Liberation Sans',sans-serif" fill="#000" stroke="#000" stroke-width="0.15">0</text>
<text x="587.2" y="515.1" font-size="7.6" text-anchor="middle" style="font-family:'Liberation Sans',sans-serif" fill="#000" stroke="#000" stroke-width="0.15">5</text>
<text x="587.2" y="491.9" font-size="7.6" text-anchor="middle" style="font-family:'Liberation Sans',sans-serif" fill="#000" stroke="#000" stroke-width="0.15">10</text>
<text x="587.2" y="468.6" font-size="7.6" text-anchor="middle" style="font-family:'Liberation Sans',sans-serif" fill="#000" stroke="#000" stroke-width="0.15">15</text>
<text x="587.2" y="445.4" font-size="7.6" text-anchor="middle" style="font-family:'Liberation Sans',sans-serif" fill="#000" stroke="#000" stroke-width="0.15">20</text>
<text x="587.2" y="422.1" font-size="7.6" text-anchor="middle" style="font-family:'Liberation Sans',sans-serif" fill="#000" stroke="#000" stroke-width="0.15">25</text>
<text x="587.2" y="398.9" font-size="7.6" text-anchor="middle" style="font-family:'Liberation Sans',sans-serif" fill="#000" stroke="#000" stroke-width="0.15">30</text>
<path d="M598.50 536V466.0H599.60V536z M598.58 536V480.0H600.78V536z M599.76 536V461.0H601.96V536z M600.94 536V443.0H603.14V536z M602.12 536V489.0H604.32V536z M603.30 536V484.0H605.50V536z M604.48 536V429.0H606.68V536z M605.66 536V452.0H607.86V536z M606.84 536V484.0H609.04V536z M608.02 536V466.0H610.22V536z M609.20 536V447.0H611.40V536z M610.38 536V489.0H612.58V536z M611.56 536V424.0H613.76V536z M612.74 536V452.0H614.94V536z M613.92 536V475.0H616.12V536z M615.10 536V489.0H617.30V536z M616.28 536V484.0H618.48V536z M617.46 536V461.0H619.66V536z M618.64 536V461.0H620.84V536z M619.82 536V484.0H622.02V536z M621.00 536V475.0H623.20V536z M622.18 536V484.0H624.38V536z M623.36 536V452.0H625.56V536z M624.54 536V461.0H626.74V536z M625.72 536V489.0H627.92V536z M626.90 536V429.0H629.10V536z M628.08 536V447.0H630.28V536z M629.26 536V484.0H631.46V536z M630.44 536V475.0H632.64V536z M631.62 536V443.0H633.82V536z M632.80 536V443.0H635.00V536z M633.98 536V447.0H636.18V536z M635.16 536V489.0H637.36V536z M636.34 536V447.0H638.54V536z M637.52 536V447.0H639.72V536z M638.70 536V461.0H640.90V536z M639.88 536V489.0H642.08V536z M641.06 536V475.0H643.26V536z M642.24 536V489.0H644.44V536z M643.42 536V452.0H645.62V536z M644.60 536V429.0H646.80V536z M645.78 536V480.0H647.98V536z M646.96 536V470.0H649.16V536z M648.14 536V461.0H650.34V536z M649.32 536V480.0H651.52V536z M650.50 536V452.0H652.70V536z M651.68 536V484.0H653.88V536z M652.86 536V447.0H655.06V536z M654.04 536V470.0H656.24V536z M655.22 536V452.0H657.42V536z M656.40 536V429.0H658.60V536z M657.58 536V443.0H659.78V536z M658.76 536V480.0H660.96V536z M659.94 536V484.0H662.14V536z M661.12 536V447.0H663.32V536z M662.30 536V447.0H664.50V536z M663.48 536V443.0H665.68V536z M664.66 536V475.0H666.86V536z M665.84 536V466.0H668.04V536z M667.02 536V484.0H669.22V536z M668.20 536V452.0H670.40V536z M669.38 536V438.0H671.58V536z M670.56 536V484.0H672.76V536z M671.74 536V447.0H673.94V536z M672.92 536V489.0H675.12V536z M674.10 536V447.0H676.30V536z M675.28 536V475.0H677.48V536z M676.46 536V456.0H678.66V536z M677.64 536V443.0H679.84V536z M678.82 536V452.0H681.02V536z M680.00 536V461.0H682.20V536z M681.18 536V433.0H683.38V536z M682.36 536V466.0H684.56V536z M683.54 536V456.0H685.74V536z M684.72 536V447.0H686.92V536z M685.90 536V424.0H688.10V536z M687.08 536V456.0H689.28V536z M688.26 536V466.0H690.46V536z M689.44 536V470.0H691.64V536z M690.62 536V475.0H692.82V536z M691.80 536V433.0H694.00V536z M692.98 536V480.0H695.18V536z M694.16 536V438.0H696.36V536z M695.34 536V433.0H697.54V536z M696.52 536V475.0H698.72V536z M697.70 536V484.0H699.90V536z M698.88 536V447.0H701.08V536z M700.06 536V470.0H702.26V536z M701.24 536V452.0H703.44V536z M702.42 536V456.0H704.62V536z M703.60 536V424.0H705.80V536z M704.78 536V466.0H706.98V536z M705.96 536V438.0H708.16V536z M707.14 536V456.0H709.34V536z M708.32 536V470.0H710.52V536z M709.50 536V447.0H711.70V536z M710.68 536V484.0H712.88V536z M711.86 536V484.0H714.06V536z M713.04 536V452.0H715.24V536z M714.22 536V461.0H716.42V536z M715.40 536V480.0H717.60V536z M716.58 536V433.0H718.78V536z M717.76 536V466.0H719.96V536z M718.94 536V480.0H721.14V536z M720.12 536V424.0H722.32V536z M721.30 536V456.0H723.50V536z M722.48 536V461.0H724.68V536z M723.66 536V489.0H725.86V536z M724.84 536V443.0H727.04V536z M726.02 536V484.0H728.22V536z M727.20 536V433.0H729.40V536z M728.38 536V452.0H730.58V536z M729.56 536V447.0H731.76V536z M730.74 536V433.0H732.94V536z M731.92 536V424.0H734.12V536z M733.10 536V429.0H735.30V536z M734.28 536V466.0H736.48V536z M735.46 536V466.0H737.66V536z M736.64 536V438.0H738.84V536z M737.82 536V466.0H740.02V536z M739.00 536V447.0H741.20V536z M740.18 536V456.0H742.38V536z M741.36 536V447.0H743.56V536z M742.54 536V433.0H744.74V536z M743.72 536V456.0H745.92V536z M744.90 536V484.0H747.10V536z M746.08 536V429.0H748.28V536z M747.26 536V484.0H749.46V536z M748.44 536V470.0H750.64V536z M749.62 536V456.0H751.82V536z M750.80 536V438.0H753.00V536z M751.98 536V443.0H754.18V536z M753.16 536V484.0H755.36V536z M754.34 536V489.0H756.54V536z M755.52 536V438.0H757.72V536z M756.70 536V438.0H758.90V536z M757.88 536V470.0H760.08V536z M759.06 536V443.0H761.26V536z M760.24 536V447.0H762.44V536z M761.42 536V443.0H763.62V536z M762.60 536V429.0H764.80V536z M763.78 536V456.0H765.98V536z M764.96 536V470.0H767.16V536z M766.14 536V438.0H768.34V536z M767.32 536V461.0H769.52V536z M768.50 536V424.0H770.70V536z M769.68 536V443.0H771.88V536z M770.86 536V466.0H773.06V536z M772.04 536V489.0H774.24V536z M773.22 536V456.0H775.42V536z M774.40 536V466.0H776.60V536z M775.58 536V480.0H777.78V536z M776.76 536V447.0H778.96V536z M777.94 536V484.0H780.14V536z M779.12 536V456.0H781.32V536z M780.30 536V489.0H782.50V536z M781.48 536V475.0H783.68V536z M782.66 536V433.0H784.86V536z M783.84 536V470.0H786.04V536z M785.02 536V480.0H787.22V536z M786.20 536V438.0H788.40V536z M787.38 536V475.0H789.58V536z M788.56 536V461.0H790.76V536z M789.74 536V461.0H791.94V536z M790.92 536V424.0H793.12V536z M792.10 536V429.0H794.30V536z M793.28 536V456.0H795.48V536z M794.46 536V484.0H796.66V536z M795.64 536V480.0H797.84V536z M796.82 536V456.0H799.02V536z M798.00 536V461.0H800.20V536z M799.18 536V452.0H801.38V536z M800.36 536V470.0H802.56V536z M801.54 536V424.0H803.74V536z M802.72 536V480.0H804.92V536z M803.90 536V429.0H806.10V536z M805.08 536V461.0H807.28V536z M806.26 536V429.0H808.46V536z M807.44 536V452.0H809.64V536z M808.62 536V470.0H810.82V536z M809.80 536V438.0H812.00V536z M810.98 536V461.0H813.18V536z M812.16 536V466.0H814.36V536z M813.34 536V443.0H815.54V536z M814.52 536V424.0H816.72V536z M815.70 536V461.0H817.90V536z M816.88 536V475.0H819.08V536z M818.06 536V480.0H820.26V536z M819.24 536V484.0H821.44V536z M820.42 536V480.0H822.62V536z M821.60 536V480.0H823.80V536z M822.78 536V475.0H824.98V536z M823.96 536V443.0H826.16V536z M825.14 536V475.0H827.34V536z M826.32 536V489.0H828.52V536z M827.50 536V456.0H829.70V536z M828.68 536V429.0H830.88V536z M829.86 536V447.0H832.06V536z M831.04 536V480.0H833.24V536z M832.22 536V470.0H834.42V536z M833.40 536V470.0H835.60V536z M834.58 536V489.0H836.78V536z M835.76 536V480.0H837.96V536z M836.94 536V461.0H839.14V536z M838.12 536V452.0H840.32V536z M839.30 536V466.0H841.50V536z M840.48 536V447.0H842.68V536z M841.66 536V447.0H843.86V536z M842.84 536V466.0H845.04V536z M844.02 536V480.0H846.22V536z M845.20 536V438.0H847.40V536z M846.38 536V429.0H848.58V536z M847.56 536V452.0H849.76V536z M848.74 536V447.0H850.94V536z M849.92 536V443.0H852.12V536z M851.10 536V443.0H853.30V536z M852.28 536V438.0H854.48V536z M853.46 536V489.0H855.66V536z M854.64 536V456.0H856.84V536z M855.82 536V424.0H858.02V536z M857.00 536V429.0H859.20V536z M858.18 536V433.0H860.38V536z M859.36 536V429.0H861.56V536z M860.54 536V443.0H862.74V536z M861.72 536V433.0H863.92V536z M862.90 536V452.0H865.10V536z M864.08 536V461.0H866.28V536z M865.26 536V461.0H867.46V536z M866.44 536V461.0H868.64V536z M867.62 536V461.0H869.82V536z M868.80 536V484.0H871.00V536z M869.98 536V456.0H872.18V536z M871.16 536V443.0H873.36V536z M872.34 536V461.0H874.54V536z M873.52 536V489.0H875.72V536z M874.70 536V475.0H876.90V536z M875.88 536V484.0H878.08V536z M877.06 536V475.0H879.26V536z M878.24 536V456.0H880.44V536z M879.42 536V480.0H881.62V536z M880.60 536V484.0H882.80V536z M881.78 536V466.0H883.98V536z M882.96 536V447.0H885.16V536z M884.14 536V489.0H886.34V536z M885.32 536V484.0H887.52V536z M886.50 536V489.0H888.70V536z M887.68 536V447.0H889.88V536z M888.86 536V480.0H891.06V536z M890.04 536V452.0H892.24V536z M891.22 536V484.0H893.42V536z M892.40 536V466.0H894.60V536z M893.58 536V447.0H895.78V536z M894.76 536V489.0H896.96V536z M895.94 536V484.0H898.14V536z M897.12 536V429.0H899.32V536z M898.30 536V475.0H900.50V536z M899.48 536V447.0H901.68V536z M900.66 536V461.0H902.86V536z M901.84 536V480.0H904.04V536z M903.02 536V443.0H905.22V536z M904.20 536V470.0H906.40V536z M905.38 536V466.0H907.58V536z M906.56 536V447.0H908.76V536z M907.74 536V466.0H909.94V536z M908.92 536V456.0H911.12V536z M910.10 536V484.0H912.30V536z M911.28 536V484.0H913.48V536z M912.46 536V429.0H914.66V536z M913.64 536V456.0H915.84V536z M914.82 536V456.0H917.02V536z M916.00 536V456.0H918.20V536z M917.18 536V456.0H919.38V536z M918.36 536V470.0H920.56V536z M919.54 536V484.0H921.74V536z M920.72 536V480.0H922.92V536z M921.90 536V484.0H924.10V536z M923.08 536V438.0H925.28V536z M924.26 536V466.0H926.46V536z M925.44 536V438.0H927.64V536z M926.62 536V470.0H928.82V536z M927.80 536V456.0H930.00V536z M928.98 536V429.0H931.18V536z M930.16 536V438.0H932.36V536z M931.34 536V480.0H933.54V536z M932.52 536V452.0H934.72V536z M933.70 536V489.0H935.90V536z M934.88 536V475.0H937.08V536z M936.06 536V452.0H938.26V536z M937.24 536V466.0H939.44V536z M938.42 536V480.0H940.62V536z M939.60 536V438.0H941.80V536z M940.78 536V452.0H942.98V536z M941.96 536V424.0H944.16V536z M943.14 536V489.0H945.34V536z M944.32 536V433.0H946.52V536z M945.50 536V452.0H947.70V536z M946.68 536V470.0H948.88V536z M947.86 536V443.0H950.06V536z M949.04 536V429.0H951.24V536z M950.22 536V484.0H952.42V536z M951.40 536V438.0H953.60V536z M952.58 536V429.0H954.78V536z M953.76 536V470.0H955.96V536z M954.94 536V452.0H957.14V536z M956.12 536V466.0H958.32V536z M957.30 536V424.0H959.50V536z M958.48 536V480.0H960.68V536z M959.66 536V466.0H961.86V536z M960.84 536V433.0H963.04V536z M962.02 536V475.0H964.22V536z M963.20 536V452.0H965.40V536z M964.38 536V452.0H966.58V536z M965.56 536V433.0H967.76V536z M966.74 536V452.0H968.94V536z M967.92 536V466.0H970.12V536z M969.10 536V443.0H971.30V536z M970.28 536V475.0H972.48V536z M971.46 536V447.0H973.66V536z M972.64 536V433.0H974.84V536z M973.82 536V433.0H976.02V536z M975.00 536V433.0H977.20V536z M976.18 536V429.0H978.38V536z M977.36 536V475.0H979.56V536z M978.54 536V433.0H980.74V536z M979.72 536V475.0H981.92V536z M980.90 536V429.0H983.10V536z M982.08 536V461.0H984.28V536z M983.26 536V438.0H985.46V536z M984.44 536V433.0H986.64V536z M985.62 536V475.0H987.82V536z M986.80 536V475.0H989.00V536z M987.98 536V452.0H990.18V536z M989.16 536V456.0H991.36V536z M990.34 536V466.0H992.54V536z M991.52 536V438.0H993.72V536z M992.70 536V489.0H994.90V536z M993.88 536V489.0H996.08V536z M995.06 536V433.0H997.26V536z M996.24 536V470.0H998.44V536z M997.42 536V456.0H999.62V536z M998.60 536V470.0H1000.80V536z M999.78 536V475.0H1001.98V536z M1000.96 536V438.0H1003.16V536z M1002.14 536V447.0H1004.34V536z M1003.32 536V466.0H1005.52V536z M1004.50 536V456.0H1006.70V536z M1005.68 536V433.0H1007.88V536z M1006.86 536V424.0H1009.06V536z M1008.04 536V438.0H1010.24V536z M1009.22 536V466.0H1011.42V536z M1010.40 536V466.0H1012.60V536z M1011.58 536V484.0H1013.78V536z M1012.76 536V475.0H1014.96V536z M1013.94 536V484.0H1016.14V536z M1015.12 536V475.0H1017.32V536z M1016.30 536V456.0H1018.50V536z M1017.48 536V475.0H1019.68V536z M1018.66 536V466.0H1020.86V536z M1019.84 536V475.0H1022.04V536z M1021.02 536V456.0H1023.22V536z M1022.20 536V447.0H1024.40V536z M1023.38 536V424.0H1025.58V536z M1024.56 536V447.0H1026.76V536z M1025.74 536V429.0H1027.94V536z M1026.92 536V489.0H1029.12V536z" fill="#000" shape-rendering="crispEdges"/>
<path d="M595.0 536.5H601.0M1025.5 536.5H1028 M595.0 512.5H601.0M1025.5 512.5H1028 M595.0 489.5H601.0M1025.5 489.5H1028 M595.0 466.5H601.0M1025.5 466.5H1028 M595.0 443.5H601.0M1025.5 443.5H1028 M595.0 419.5H601.0M1025.5 419.5H1028 M595.0 396.5H601.0M1025.5 396.5H1028 M597.0 536.5H600.0M1026.5 536.5H1028 M597.0 531.5H600.0M1026.5 531.5H1028 M597.0 526.5H600.0M1026.5 526.5H1028 M597.0 522.5H600.0M1026.5 522.5H1028 M597.0 517.5H600.0M1026.5 517.5H1028 M597.0 512.5H600.0M1026.5 512.5H1028 M597.0 508.5H600.0M1026.5 508.5H1028 M597.0 503.5H600.0M1026.5 503.5H1028 M597.0 498.5H600.0M1026.5 498.5H1028 M597.0 494.5H600.0M1026.5 494.5H1028 M597.0 489.5H600.0M1026.5 489.5H1028 M597.0 484.5H600.0M1026.5 484.5H1028 M597.0 480.5H600.0M1026.5 480.5H1028 M597.0 475.5H600.0M1026.5 475.5H1028 M597.0 470.5H600.0M1026.5 470.5H1028 M597.0 466.5H600.0M1026.5 466.5H1028 M597.0 461.5H600.0M1026.5 461.5H1028 M597.0 456.5H600.0M1026.5 456.5H1028 M597.0 452.5H600.0M1026.5 452.5H1028 M597.0 447.5H600.0M1026.5 447.5H1028 M597.0 443.5H600.0M1026.5 443.5H1028 M597.0 438.5H600.0M1026.5 438.5H1028 M597.0 433.5H600.0M1026.5 433.5H1028 M597.0 429.5H600.0M1026.5 429.5H1028 M597.0 424.5H600.0M1026.5 424.5H1028 M597.0 419.5H600.0M1026.5 419.5H1028 M597.0 415.5H600.0M1026.5 415.5H1028 M597.0 410.5H600.0M1026.5 410.5H1028 M597.0 405.5H600.0M1026.5 405.5H1028 M597.0 401.5H600.0M1026.5 401.5H1028 M597.0 396.5H600.0M1026.5 396.5H1028 M598.5 533.5V539.5M598.5 396.5V399.5 M610.5 535.0V538.0M610.5 396.5V398.0 M622.5 535.0V538.0M622.5 396.5V398.0 M633.5 535.0V538.0M633.5 396.5V398.0 M645.5 535.0V538.0M645.5 396.5V398.0 M657.5 533.5V539.5M657.5 396.5V399.5 M669.5 535.0V538.0M669.5 396.5V398.0 M681.5 535.0V538.0M681.5 396.5V398.0 M692.5 535.0V538.0M692.5 396.5V398.0 M704.5 535.0V538.0M704.5 396.5V398.0 M716.5 533.5V539.5M716.5 396.5V399.5 M728.5 535.0V538.0M728.5 396.5V398.0 M740.5 535.0V538.0M740.5 396.5V398.0 M751.5 535.0V538.0M751.5 396.5V398.0 M763.5 535.0V538.0M763.5 396.5V398.0 M775.5 533.5V539.5M775.5 396.5V399.5 M787.5 535.0V538.0M787.5 396.5V398.0 M799.5 535.0V538.0M799.5 396.5V398.0 M810.5 535.0V538.0M810.5 396.5V398.0 M822.5 535.0V538.0M822.5 396.5V398.0 M834.5 533.5V539.5M834.5 396.5V399.5 M846.5 535.0V538.0M846.5 396.5V398.0 M858.5 535.0V538.0M858.5 396.5V398.0 M869.5 535.0V538.0M869.5 396.5V398.0 M881.5 535.0V538.0M881.5 396.5V398.0 M893.5 533.5V539.5M893.5 396.5V399.5 M905.5 535.0V538.0M905.5 396.5V398.0 M917.5 535.0V538.0M917.5 396.5V398.0 M928.5 535.0V538.0M928.5 396.5V398.0 M940.5 535.0V538.0M940.5 396.5V398.0 M952.5 533.5V539.5M952.5 396.5V399.5 M964.5 535.0V538.0M964.5 396.5V398.0 M976.5 535.0V538.0M976.5 396.5V398.0 M987.5 535.0V538.0M987.5 396.5V398.0 M999.5 535.0V538.0M999.5 396.5V398.0 M1011.5 533.5V539.5M1011.5 396.5V399.5 M1023.5 535.0V538.0M1023.5 396.5V398.0" stroke="#000" stroke-width="1" fill="none" shape-rendering="crispEdges"/>
<text x="598.5" y="548.6" font-size="7.6" text-anchor="middle" style="font-family:'Liberation Sans',sans-serif" fill="#000" stroke="#000" stroke-width="0.15">1,0</text>
<text x="657.5" y="548.6" font-size="7.6" text-anchor="middle" style="font-family:'Liberation Sans',sans-serif" fill="#000" stroke="#000" stroke-width="0.15">51,0</text>
<text x="716.5" y="548.6" font-size="7.6" text-anchor="middle" style="font-family:'Liberation Sans',sans-serif" fill="#000" stroke="#000" stroke-width="0.15">101,0</text>
<text x="775.5" y="548.6" font-size="7.6" text-anchor="middle" style="font-family:'Liberation Sans',sans-serif" fill="#000" stroke="#000" stroke-width="0.15">151,0</text>
<text x="834.5" y="548.6" font-size="7.6" text-anchor="middle" style="font-family:'Liberation Sans',sans-serif" fill="#000" stroke="#000" stroke-width="0.15">201,0</text>
<text x="893.5" y="548.6" font-size="7.6" text-anchor="middle" style="font-family:'Liberation Sans',sans-serif" fill="#000" stroke="#000" stroke-width="0.15">251,0</text>
<text x="952.5" y="548.6" font-size="7.6" text-anchor="middle" style="font-family:'Liberation Sans',sans-serif" fill="#000" stroke="#000" stroke-width="0.15">301,0</text>
<text x="1011.5" y="548.6" font-size="7.6" text-anchor="middle" style="font-family:'Liberation Sans',sans-serif" fill="#000" stroke="#000" stroke-width="0.15">351,0</text>
<text x="803.7" y="377" font-size="9.3" text-anchor="middle" style="font-family:'Liberation Sans',sans-serif" fill="#000">Počet poruch za jednotlivé dny roku</text>
<text x="812" y="559" font-size="6.5" text-anchor="middle" style="font-family:'Liberation Sans',sans-serif" fill="#111">Dny</text>
<text transform="translate(575,467) rotate(-90)" font-size="6.7" font-weight="bold" text-anchor="middle" style="font-family:'Liberation Sans',sans-serif" fill="#000">Počet poruch</text>
<rect x="598.5" y="385" width="65" height="8" fill="#fff" stroke="#000" shape-rendering="crispEdges"/>
<rect x="600.5" y="387" width="15" height="4" fill="url(#gb2l)" stroke="#000" stroke-width="1" shape-rendering="crispEdges"/>
<text x="620.5" y="390.7" font-size="5.5" style="font-family:'Liberation Sans',sans-serif" fill="#333">Počet poruch</text>
</svg>
<svg style="position:absolute;left:98px;top:573px" width="462" height="200" viewBox="98 573 462 200">
<defs><linearGradient id="gp1" x1="0" y1="0" x2="1" y2="1"><stop offset="0" stop-color="#ffffff"/><stop offset="1" stop-color="#daa520"/></linearGradient><linearGradient id="gp1VWRNS" x1="0" y1="0" x2="1" y2="1"><stop offset="0" stop-color="#8080c4"/><stop offset="1" stop-color="#e0e0f2"/></linearGradient><linearGradient id="gp1SKODA" x1="0" y1="0" x2="1" y2="1"><stop offset="0" stop-color="#aa62b6"/><stop offset="1" stop-color="#e2bce8"/></linearGradient><linearGradient id="gp1BMW" x1="0" y1="0" x2="1" y2="1"><stop offset="0" stop-color="#44d044"/><stop offset="1" stop-color="#b0ecb0"/></linearGradient><linearGradient id="gp1SEAT" x1="0" y1="0" x2="1" y2="1"><stop offset="0" stop-color="#f4a870"/><stop offset="1" stop-color="#fcd8bc"/></linearGradient><linearGradient id="gp1AUDI" x1="0" y1="0" x2="1" y2="1"><stop offset="0" stop-color="#ff5050"/><stop offset="1" stop-color="#ffc0c0"/></linearGradient></defs>
<rect x="98.5" y="573.5" width="461" height="199" fill="url(#gp1)" stroke="#000"/>
<path d="M334.6 689.1L394.1 689.1A59.5 59.5 0 0 1 334.6 748.6Z" fill="url(#gp1VWRNS)" stroke="#000" stroke-width="1" stroke-linejoin="round"/>
<path d="M330.0 684.5L330.0 744.0A59.5 59.5 0 0 1 282.1 719.8Z" fill="url(#gp1SKODA)" stroke="#000" stroke-width="1" stroke-linejoin="round"/>
<path d="M330.0 684.5L282.1 719.8A59.5 59.5 0 0 1 281.4 650.1Z" fill="url(#gp1BMW)" stroke="#000" stroke-width="1" stroke-linejoin="round"/>
<path d="M330.0 684.5L281.4 650.1A59.5 59.5 0 0 1 362.1 634.4Z" fill="url(#gp1SEAT)" stroke="#000" stroke-width="1" stroke-linejoin="round"/>
<path d="M330.0 684.5L362.1 634.4A59.5 59.5 0 0 1 389.5 684.5Z" fill="url(#gp1AUDI)" stroke="#000" stroke-width="1" stroke-linejoin="round"/>
<path d="M311 620.5h6l2 5" fill="none" stroke="#333" stroke-width="1"/>
<rect x="295.5" y="617.5" width="16" height="7" rx="1" fill="#fff" stroke="#000" stroke-width="1"/>
<text x="303.5" y="622.7" font-size="5.3" text-anchor="middle" style="font-family:'Liberation Sans',sans-serif" fill="#ff3030">SEAT</text>
<path d="M393 653.5h-6l-5 3" fill="none" stroke="#333" stroke-width="1"/>
<rect x="393.5" y="650.5" width="14" height="7" rx="1" fill="#fff" stroke="#000" stroke-width="1"/>
<text x="400.5" y="655.7" font-size="5.3" text-anchor="middle" style="font-family:'Liberation Sans',sans-serif" fill="#333">AUDI</text>
<path d="M258 684.5h12" fill="none" stroke="#333" stroke-width="1"/>
<rect x="243.5" y="681.5" width="15" height="7" rx="1" fill="#fff" stroke="#000" stroke-width="1"/>
<text x="251.0" y="686.7" font-size="5.3" text-anchor="middle" style="font-family:'Liberation Sans',sans-serif" fill="#333">BMW</text>
<path d="M293 743.5h7l3 -5" fill="none" stroke="#333" stroke-width="1"/>
<rect x="273.5" y="739.5" width="20" height="7" rx="1" fill="#fff" stroke="#000" stroke-width="1"/>
<text x="283.5" y="744.7" font-size="5.3" text-anchor="middle" style="font-family:'Liberation Sans',sans-serif" fill="#333">SKODA</text>
<path d="M386 735.5h-6l-4 -4" fill="none" stroke="#333" stroke-width="1"/>
<rect x="386.5" y="731.5" width="23" height="7" rx="1" fill="#fff" stroke="#000" stroke-width="1"/>
<text x="398.0" y="736.7" font-size="5.3" text-anchor="middle" style="font-family:'Liberation Sans',sans-serif" fill="#333">VW-RNS</text>
<defs><linearGradient id="gp1LVWRNS" x1="0" y1="0" x2="1" y2="0"><stop offset="0" stop-color="#2020a0"/><stop offset="1" stop-color="#d8d8ff"/></linearGradient><linearGradient id="gp1LSKODA" x1="0" y1="0" x2="1" y2="0"><stop offset="0" stop-color="#a028a8"/><stop offset="1" stop-color="#f4c8f4"/></linearGradient><linearGradient id="gp1LBMW" x1="0" y1="0" x2="1" y2="0"><stop offset="0" stop-color="#18d818"/><stop offset="1" stop-color="#c8ffc8"/></linearGradient><linearGradient id="gp1LSEAT" x1="0" y1="0" x2="1" y2="0"><stop offset="0" stop-color="#ffa060"/><stop offset="1" stop-color="#ffecd8"/></linearGradient><linearGradient id="gp1LAUDI" x1="0" y1="0" x2="1" y2="0"><stop offset="0" stop-color="#ff1010"/><stop offset="1" stop-color="#ffc8c8"/></linearGradient></defs>
<rect x="495.5" y="603.5" width="42" height="30" fill="#fff" stroke="#000" shape-rendering="crispEdges"/>
<rect x="497.5" y="604.7" width="12.5" height="3.2" fill="url(#gp1LVWRNS)" stroke="#000" stroke-width="1"/>
<text x="513" y="607.5" font-size="4.7" style="font-family:'Liberation Sans',sans-serif" fill="#333">VW-RNS</text>
<rect x="497.5" y="610.7" width="12.5" height="3.2" fill="url(#gp1LSKODA)" stroke="#000" stroke-width="1"/>
<text x="513" y="613.5" font-size="4.7" style="font-family:'Liberation Sans',sans-serif" fill="#333">SKODA</text>
<rect x="497.5" y="616.7" width="12.5" height="3.2" fill="url(#gp1LBMW)" stroke="#000" stroke-width="1"/>
<text x="513" y="619.5" font-size="4.7" style="font-family:'Liberation Sans',sans-serif" fill="#333">BMW</text>
<rect x="497.5" y="622.7" width="12.5" height="3.2" fill="url(#gp1LSEAT)" stroke="#000" stroke-width="1"/>
<text x="513" y="625.5" font-size="4.7" style="font-family:'Liberation Sans',sans-serif" fill="#333">SEAT</text>
<rect x="497.5" y="628.7" width="12.5" height="3.2" fill="url(#gp1LAUDI)" stroke="#000" stroke-width="1"/>
<text x="513" y="631.5" font-size="4.7" style="font-family:'Liberation Sans',sans-serif" fill="#333">AUDI</text>
<text x="329" y="590" font-size="12.7" font-weight="bold" font-style="italic" text-anchor="middle" style="font-family:'Liberation Serif',serif" fill="#000">Podíl linek na celkovém počtu poruch za Měsíc</text>
</svg>
<svg style="position:absolute;left:564px;top:572px" width="479" height="201" viewBox="564 572 479 201">
<defs><linearGradient id="gp2" x1="0" y1="0" x2="1" y2="1"><stop offset="0" stop-color="#ffffff"/><stop offset="1" stop-color="#daa520"/></linearGradient><linearGradient id="gp2VWRNS" x1="0" y1="0" x2="1" y2="1"><stop offset="0" stop-color="#8080c4"/><stop offset="1" stop-color="#e0e0f2"/></linearGradient><linearGradient id="gp2SKODA" x1="0" y1="0" x2="1" y2="1"><stop offset="0" stop-color="#aa62b6"/><stop offset="1" stop-color="#e2bce8"/></linearGradient><linearGradient id="gp2BMW" x1="0" y1="0" x2="1" y2="1"><stop offset="0" stop-color="#44d044"/><stop offset="1" stop-color="#b0ecb0"/></linearGradient><linearGradient id="gp2SEAT" x1="0" y1="0" x2="1" y2="1"><stop offset="0" stop-color="#f4a870"/><stop offset="1" stop-color="#fcd8bc"/></linearGradient><linearGradient id="gp2AUDI" x1="0" y1="0" x2="1" y2="1"><stop offset="0" stop-color="#ff5050"/><stop offset="1" stop-color="#ffc0c0"/></linearGradient></defs>
<rect x="564.5" y="572.5" width="478" height="200" fill="url(#gp2)" stroke="#000"/>
<path d="M808.7 688.4L867.7 688.4A59 59 0 0 1 812.4 747.3Z" fill="url(#gp2VWRNS)" stroke="#000" stroke-width="1" stroke-linejoin="round"/>
<path d="M804.0 684.0L807.7 742.9A59 59 0 0 1 756.5 718.9Z" fill="url(#gp2SKODA)" stroke="#000" stroke-width="1" stroke-linejoin="round"/>
<path d="M804.0 684.0L756.5 718.9A59 59 0 0 1 751.9 656.3Z" fill="url(#gp2BMW)" stroke="#000" stroke-width="1" stroke-linejoin="round"/>
<path d="M804.0 684.0L751.9 656.3A59 59 0 0 1 833.0 632.6Z" fill="url(#gp2SEAT)" stroke="#000" stroke-width="1" stroke-linejoin="round"/>
<path d="M804.0 684.0L833.0 632.6A59 59 0 0 1 863.0 684.0Z" fill="url(#gp2AUDI)" stroke="#000" stroke-width="1" stroke-linejoin="round"/>
<path d="M779 621.5h6l2 5" fill="none" stroke="#333" stroke-width="1"/>
<rect x="764.5" y="618.5" width="15" height="7" rx="1" fill="#fff" stroke="#000" stroke-width="1"/>
<text x="772.0" y="623.7" font-size="5.3" text-anchor="middle" style="font-family:'Liberation Sans',sans-serif" fill="#ff3030">SEAT</text>
<path d="M866 651.5h-6l-4 3" fill="none" stroke="#333" stroke-width="1"/>
<rect x="866.5" y="648.5" width="14" height="7" rx="1" fill="#fff" stroke="#000" stroke-width="1"/>
<text x="873.5" y="653.7" font-size="5.3" text-anchor="middle" style="font-family:'Liberation Sans',sans-serif" fill="#333">AUDI</text>
<path d="M733 688.5h12" fill="none" stroke="#333" stroke-width="1"/>
<rect x="718.5" y="685.5" width="15" height="7" rx="1" fill="#fff" stroke="#000" stroke-width="1"/>
<text x="726.0" y="690.7" font-size="5.3" text-anchor="middle" style="font-family:'Liberation Sans',sans-serif" fill="#333">BMW</text>
<path d="M770 743.5h6l3 -5" fill="none" stroke="#333" stroke-width="1"/>
<rect x="749.5" y="739.5" width="21" height="7" rx="1" fill="#fff" stroke="#000" stroke-width="1"/>
<text x="760.0" y="744.7" font-size="5.3" text-anchor="middle" style="font-family:'Liberation Sans',sans-serif" fill="#333">SKODA</text>
<path d="M862 733.5h-6l-4 -4" fill="none" stroke="#333" stroke-width="1"/>
<rect x="862.5" y="729.5" width="23" height="7" rx="1" fill="#fff" stroke="#000" stroke-width="1"/>
<text x="874.0" y="734.7" font-size="5.3" text-anchor="middle" style="font-family:'Liberation Sans',sans-serif" fill="#333">VW-RNS</text>
<defs><linearGradient id="gp2LVWRNS" x1="0" y1="0" x2="1" y2="0"><stop offset="0" stop-color="#2020a0"/><stop offset="1" stop-color="#d8d8ff"/></linearGradient><linearGradient id="gp2LSKODA" x1="0" y1="0" x2="1" y2="0"><stop offset="0" stop-color="#a028a8"/><stop offset="1" stop-color="#f4c8f4"/></linearGradient><linearGradient id="gp2LBMW" x1="0" y1="0" x2="1" y2="0"><stop offset="0" stop-color="#18d818"/><stop offset="1" stop-color="#c8ffc8"/></linearGradient><linearGradient id="gp2LSEAT" x1="0" y1="0" x2="1" y2="0"><stop offset="0" stop-color="#ffa060"/><stop offset="1" stop-color="#ffecd8"/></linearGradient><linearGradient id="gp2LAUDI" x1="0" y1="0" x2="1" y2="0"><stop offset="0" stop-color="#ff1010"/><stop offset="1" stop-color="#ffc8c8"/></linearGradient></defs>
<rect x="974.5" y="602.5" width="45" height="35" fill="#fff" stroke="#000" shape-rendering="crispEdges"/>
<rect x="976.5" y="604.4" width="14.5" height="3.2" fill="url(#gp2LVWRNS)" stroke="#000" stroke-width="1"/>
<text x="995" y="607.2" font-size="5.1" style="font-family:'Liberation Sans',sans-serif" fill="#333">VW-RNS</text>
<rect x="976.5" y="611.4" width="14.5" height="3.2" fill="url(#gp2LSKODA)" stroke="#000" stroke-width="1"/>
<text x="995" y="614.2" font-size="5.1" style="font-family:'Liberation Sans',sans-serif" fill="#333">SKODA</text>
<rect x="976.5" y="618.4" width="14.5" height="3.2" fill="url(#gp2LBMW)" stroke="#000" stroke-width="1"/>
<text x="995" y="621.2" font-size="5.1" style="font-family:'Liberation Sans',sans-serif" fill="#333">BMW</text>
<rect x="976.5" y="625.4" width="14.5" height="3.2" fill="url(#gp2LSEAT)" stroke="#000" stroke-width="1"/>
<text x="995" y="628.2" font-size="5.1" style="font-family:'Liberation Sans',sans-serif" fill="#333">SEAT</text>
<rect x="976.5" y="632.4" width="14.5" height="3.2" fill="url(#gp2LAUDI)" stroke="#000" stroke-width="1"/>
<text x="995" y="635.2" font-size="5.1" style="font-family:'Liberation Sans',sans-serif" fill="#333">AUDI</text>
<text x="804" y="589" font-size="13.2" font-weight="bold" font-style="italic" text-anchor="middle" style="font-family:'Liberation Serif',serif" fill="#000">Podíl linek na celkovém počtu poruch za Rok</text>
</svg>
<div class="abs" style="left:4px;top:773px;width:1039px;height:1px;background:#fff"></div>
<div id="status">
<div class="sp" style="left:1px;width:123px"><span id="t_s1">Uživatel: 'Andon Andon'</span></div>
<div class="sp" style="left:126px;width:94px"><span id="t_s2">Server: 'localhost'</span></div>
<div class="sp" style="left:222px;width:801px"></div>
<svg class="abs" style="left:1025px;top:7px" width="13" height="13" shape-rendering="crispEdges"><g fill="#fff"><rect x="10" y="2" width="2" height="2"/><rect x="6" y="6" width="2" height="2"/><rect x="10" y="6" width="2" height="2"/><rect x="2" y="10" width="2" height="2"/><rect x="6" y="10" width="2" height="2"/><rect x="10" y="10" width="2" height="2"/></g><g fill="#808080"><rect x="9" y="1" width="2" height="2"/><rect x="5" y="5" width="2" height="2"/><rect x="9" y="5" width="2" height="2"/><rect x="1" y="9" width="2" height="2"/><rect x="5" y="9" width="2" height="2"/><rect x="9" y="9" width="2" height="2"/></g></svg>
</div>
</body></html>
